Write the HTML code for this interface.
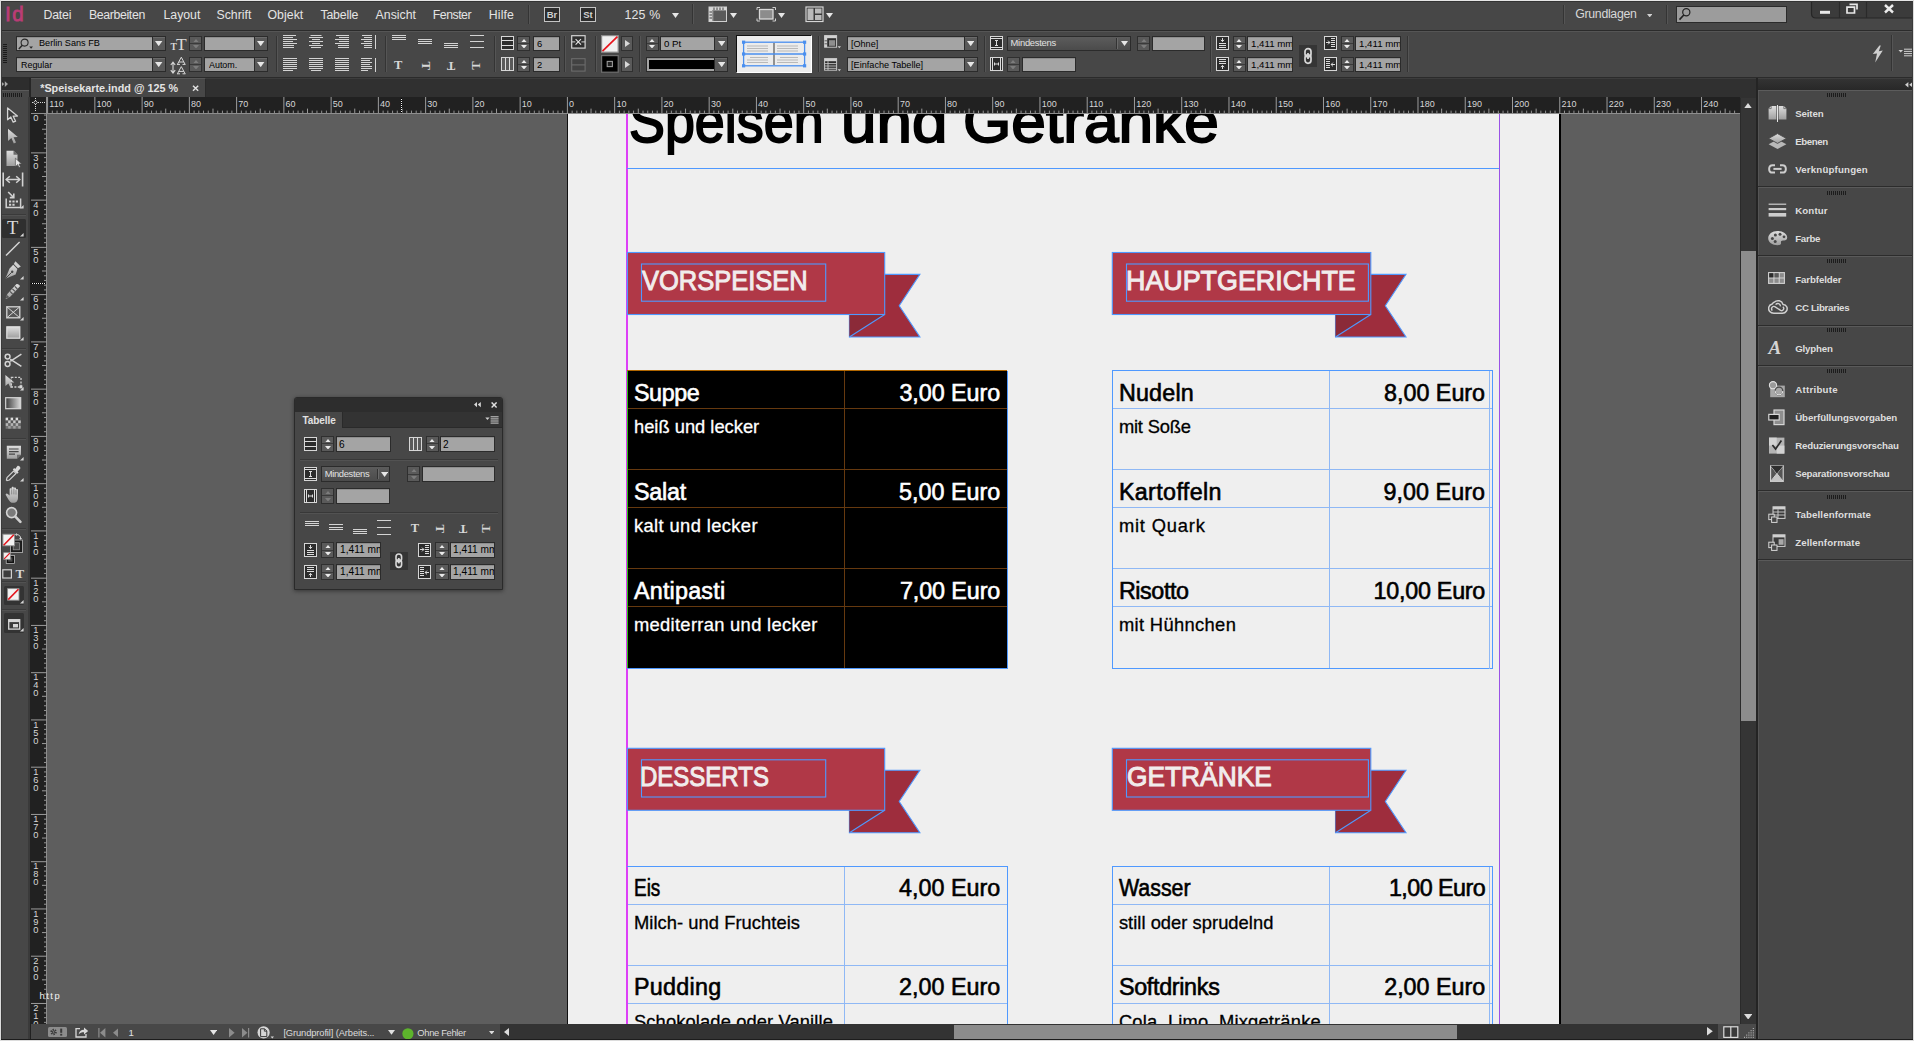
<!DOCTYPE html>
<html lang="de"><head><meta charset="utf-8"><title>Speisekarte.indd</title><style>
html,body{margin:0;padding:0;}
body{width:1914px;height:1041px;overflow:hidden;background:#474747;position:relative;font-family:"Liberation Sans",sans-serif;}
div,svg,span{position:absolute;box-sizing:border-box;}
.t{white-space:nowrap;line-height:1;}
.b{font-weight:bold;}
.fld{background:#a6a6a6;border:1px solid #2c2c2c;}
.ft{white-space:nowrap;line-height:1;color:#000;font-size:11px;}
.doc{font-family:"Liberation Sans",sans-serif;white-space:nowrap;line-height:1;}
span.r{position:static;}
</style></head><body>
<div style="left:47px;top:114px;width:1693px;height:910px;background:#5e5e5e;overflow:hidden;">
<div style="left:520px;top:-114px;width:992px;height:1100px;background:#efefef;"></div>
<div style="left:519.9px;top:-114px;width:1.1px;height:1100px;background:#101010;"></div>
<div style="left:1512px;top:-114px;width:1.5px;height:1100px;background:#000;"></div>
<div style="left:579.3px;top:-114px;width:1.6px;height:1100px;background:#dd3ff7;"></div>
<div style="left:1451.5px;top:-114px;width:1.4px;height:1100px;background:#9a52e6;"></div>
<div class="doc" style="left:582.15px;top:-21.700000000000014px;font-size:60px;color:#000;-webkit-text-stroke:1.9px #000;transform-origin:0 0;transform:scaleX(0.8975);">Speisen</div>
<div class="doc" style="left:793.61px;top:-21.700000000000014px;font-size:60px;color:#000;-webkit-text-stroke:1.9px #000;transform-origin:0 0;transform:scaleX(1.0627);">und</div>
<div class="doc" style="left:915.76px;top:-21.700000000000014px;font-size:60px;color:#000;-webkit-text-stroke:1.9px #000;transform-origin:0 0;transform:scaleX(1.0364);">Getränke</div>
<div style="left:580px;top:53.69999999999999px;width:872px;height:1.2px;background:#4f99ff;"></div>
<svg style="left:0;top:0;" width="1700" height="920" viewBox="0 0 1700 920"><polygon points="802.4,160.4 872.9,160.4 852.2,191.7 872.9,223.0 802.4,223.0" fill="#9e2d3d" stroke="#4f99ff" stroke-width="1.1"/><polygon points="802.4,200.5 837.7,200.5 802.4,223.0" fill="#8b2a38"/><line x1="802.4" y1="223.0" x2="837.7" y2="200.5" stroke="#4f99ff" stroke-width="1.1"/><rect x="580.4" y="138.5" width="257.3" height="62" fill="#b03847" stroke="#4f99ff" stroke-width="1.1"/><rect x="594.5" y="150.0" width="184.2" height="37.2" fill="none" stroke="#4f99ff" stroke-width="1.1"/></svg>
<div class="doc" style="left:594.82px;top:153.4px;font-size:28px;color:#f1ecec;-webkit-text-stroke:1.0px #f1ecec;transform-origin:0 0;transform:scaleX(0.9101);">VORSPEISEN</div>
<svg style="left:0;top:0;" width="1700" height="920" viewBox="0 0 1700 920"><polygon points="1288.5,160.4 1359.0,160.4 1338.3,191.7 1359.0,223.0 1288.5,223.0" fill="#9e2d3d" stroke="#4f99ff" stroke-width="1.1"/><polygon points="1288.5,200.5 1323.8,200.5 1288.5,223.0" fill="#8b2a38"/><line x1="1288.5" y1="223.0" x2="1323.8" y2="200.5" stroke="#4f99ff" stroke-width="1.1"/><rect x="1065.3" y="138.5" width="258.5" height="62" fill="#b03847" stroke="#4f99ff" stroke-width="1.1"/><rect x="1079.5" y="150.0" width="241.9" height="37.2" fill="none" stroke="#4f99ff" stroke-width="1.1"/></svg>
<div class="doc" style="left:1079.29px;top:153.4px;font-size:28px;color:#f1ecec;-webkit-text-stroke:1.0px #f1ecec;transform-origin:0 0;transform:scaleX(0.9590);">HAUPTGERICHTE</div>
<svg style="left:0;top:0;" width="1700" height="920" viewBox="0 0 1700 920"><polygon points="802.4,656.2 872.9,656.2 852.2,687.5 872.9,718.8 802.4,718.8" fill="#9e2d3d" stroke="#4f99ff" stroke-width="1.1"/><polygon points="802.4,696.3 837.7,696.3 802.4,718.8" fill="#8b2a38"/><line x1="802.4" y1="718.8" x2="837.7" y2="696.3" stroke="#4f99ff" stroke-width="1.1"/><rect x="580.4" y="634.3" width="257.3" height="62" fill="#b03847" stroke="#4f99ff" stroke-width="1.1"/><rect x="594.5" y="645.8" width="184.2" height="37.2" fill="none" stroke="#4f99ff" stroke-width="1.1"/></svg>
<div class="doc" style="left:592.71px;top:649.1999999999999px;font-size:28px;color:#f1ecec;-webkit-text-stroke:1.0px #f1ecec;transform-origin:0 0;transform:scaleX(0.8570);">DESSERTS</div>
<svg style="left:0;top:0;" width="1700" height="920" viewBox="0 0 1700 920"><polygon points="1288.5,656.2 1359.0,656.2 1338.3,687.5 1359.0,718.8 1288.5,718.8" fill="#9e2d3d" stroke="#4f99ff" stroke-width="1.1"/><polygon points="1288.5,696.3 1323.8,696.3 1288.5,718.8" fill="#8b2a38"/><line x1="1288.5" y1="718.8" x2="1323.8" y2="696.3" stroke="#4f99ff" stroke-width="1.1"/><rect x="1065.3" y="634.3" width="258.5" height="62" fill="#b03847" stroke="#4f99ff" stroke-width="1.1"/><rect x="1079.5" y="645.8" width="241.9" height="37.2" fill="none" stroke="#4f99ff" stroke-width="1.1"/></svg>
<div class="doc" style="left:1079.88px;top:649.1999999999999px;font-size:28px;color:#f1ecec;-webkit-text-stroke:1.0px #f1ecec;transform-origin:0 0;transform:scaleX(0.9397);">GETRÄNKE</div>
<div style="left:580.4px;top:256.5px;width:379.80000000000007px;height:298px;background:#000;"></div>
<div style="left:580.4px;top:256.0px;width:379.80000000000007px;height:1.1px;background:#66390f;"></div>
<div style="left:580.4px;top:293.7px;width:379.80000000000007px;height:1.1px;background:#66390f;"></div>
<div style="left:580.4px;top:355.0px;width:379.80000000000007px;height:1.1px;background:#66390f;"></div>
<div style="left:580.4px;top:392.7px;width:379.80000000000007px;height:1.1px;background:#66390f;"></div>
<div style="left:580.4px;top:454.0px;width:379.80000000000007px;height:1.1px;background:#66390f;"></div>
<div style="left:580.4px;top:491.70000000000005px;width:379.80000000000007px;height:1.1px;background:#66390f;"></div>
<div style="left:580.4px;top:554.0px;width:379.80000000000007px;height:1.1px;background:#66390f;"></div>
<div style="left:797.0px;top:256.5px;width:1.1px;height:298px;background:#66390f;"></div>
<div style="left:579.8px;top:256.5px;width:1.3px;height:298px;background:#2bc010;"></div>
<div style="left:580.4px;top:255.89999999999998px;width:379.80000000000007px;height:1.2px;background:#b06600;"></div>
<div style="left:959.6px;top:256.5px;width:1.3px;height:298.5px;background:#4f99ff;"></div>
<div style="left:580.4px;top:554.1px;width:379.80000000000007px;height:1.2px;background:#4f99ff;"></div>
<div class="doc" style="left:587.0px;top:267.59999999999997px;font-size:23.3px;color:#fff;-webkit-text-stroke:0.6px #fff;letter-spacing:-0.415px;">Suppe</div>
<div class="doc" style="left:852.4000000000001px;top:267.59999999999997px;font-size:23.3px;color:#fff;-webkit-text-stroke:0.6px #fff;letter-spacing:-0.027px;">3,00 Euro</div>
<div class="doc" style="left:587.0px;top:303.79999999999995px;font-size:18.33px;color:#fff;-webkit-text-stroke:0.3px #fff;letter-spacing:-0.008px;">heiß und lecker</div>
<div class="doc" style="left:587.0px;top:366.59999999999997px;font-size:23.3px;color:#fff;-webkit-text-stroke:0.6px #fff;letter-spacing:-0.222px;">Salat</div>
<div class="doc" style="left:852.1px;top:366.59999999999997px;font-size:23.3px;color:#fff;-webkit-text-stroke:0.6px #fff;letter-spacing:0.007px;">5,00 Euro</div>
<div class="doc" style="left:587.0px;top:402.79999999999995px;font-size:18.33px;color:#fff;-webkit-text-stroke:0.3px #fff;letter-spacing:0.381px;">kalt und lecker</div>
<div class="doc" style="left:587.0px;top:465.6px;font-size:23.3px;color:#fff;-webkit-text-stroke:0.6px #fff;letter-spacing:0.215px;">Antipasti</div>
<div class="doc" style="left:853.0px;top:465.6px;font-size:23.3px;color:#fff;-webkit-text-stroke:0.6px #fff;letter-spacing:-0.093px;">7,00 Euro</div>
<div class="doc" style="left:587.0px;top:501.79999999999995px;font-size:18.33px;color:#fff;-webkit-text-stroke:0.3px #fff;letter-spacing:0.311px;">mediterran und lecker</div>
<div style="left:1065.3px;top:256.0px;width:379.79999999999995px;height:1.1px;background:#8fb8f5;"></div>
<div style="left:1065.3px;top:293.7px;width:379.79999999999995px;height:1.1px;background:#8fb8f5;"></div>
<div style="left:1065.3px;top:355.0px;width:379.79999999999995px;height:1.1px;background:#8fb8f5;"></div>
<div style="left:1065.3px;top:392.7px;width:379.79999999999995px;height:1.1px;background:#8fb8f5;"></div>
<div style="left:1065.3px;top:454.0px;width:379.79999999999995px;height:1.1px;background:#8fb8f5;"></div>
<div style="left:1065.3px;top:491.70000000000005px;width:379.79999999999995px;height:1.1px;background:#8fb8f5;"></div>
<div style="left:1065.3px;top:554.0px;width:379.79999999999995px;height:1.1px;background:#8fb8f5;"></div>
<div style="left:1281.8999999999999px;top:256.5px;width:1.1px;height:298px;background:#8fb8f5;"></div>
<div style="left:1064.7px;top:256.5px;width:1.3px;height:298px;background:#8fb8f5;"></div>
<div style="left:1064.8px;top:255.89999999999998px;width:380.79999999999995px;height:1.3px;background:#4f99ff;"></div>
<div style="left:1064.8px;top:554.0px;width:380.79999999999995px;height:1.3px;background:#4f99ff;"></div>
<div style="left:1064.7px;top:256.5px;width:1.2px;height:298px;background:#4f99ff;"></div>
<div style="left:1444.5px;top:256.5px;width:1.2px;height:298px;background:#4f99ff;"></div>
<div style="left:1442.3px;top:256.5px;width:1px;height:298px;background:#8fb8f5;"></div>
<div class="doc" style="left:1071.8999999999999px;top:267.59999999999997px;font-size:23.3px;color:#000;-webkit-text-stroke:0.6px #000;letter-spacing:0.211px;">Nudeln</div>
<div class="doc" style="left:1337.0px;top:267.59999999999997px;font-size:23.3px;color:#000;-webkit-text-stroke:0.6px #000;letter-spacing:0.007px;">8,00 Euro</div>
<div class="doc" style="left:1071.8999999999999px;top:303.79999999999995px;font-size:18.33px;color:#000;-webkit-text-stroke:0.3px #000;letter-spacing:-0.18px;">mit Soße</div>
<div class="doc" style="left:1071.8999999999999px;top:366.59999999999997px;font-size:23.3px;color:#000;-webkit-text-stroke:0.6px #000;letter-spacing:0.369px;">Kartoffeln</div>
<div class="doc" style="left:1336.3999999999999px;top:366.59999999999997px;font-size:23.3px;color:#000;-webkit-text-stroke:0.6px #000;letter-spacing:0.073px;">9,00 Euro</div>
<div class="doc" style="left:1071.8999999999999px;top:402.79999999999995px;font-size:18.33px;color:#000;-webkit-text-stroke:0.3px #000;letter-spacing:0.818px;">mit Quark</div>
<div class="doc" style="left:1071.8999999999999px;top:465.6px;font-size:23.3px;color:#000;-webkit-text-stroke:0.6px #000;letter-spacing:-0.402px;">Risotto</div>
<div class="doc" style="left:1326.5px;top:465.6px;font-size:23.3px;color:#000;-webkit-text-stroke:0.6px #000;letter-spacing:-0.24px;">10,00 Euro</div>
<div class="doc" style="left:1071.8999999999999px;top:501.79999999999995px;font-size:18.33px;color:#000;-webkit-text-stroke:0.3px #000;letter-spacing:0.35px;">mit Hühnchen</div>
<div style="left:580.4px;top:752.0px;width:379.80000000000007px;height:1.1px;background:#8fb8f5;"></div>
<div style="left:580.4px;top:789.7px;width:379.80000000000007px;height:1.1px;background:#8fb8f5;"></div>
<div style="left:580.4px;top:851.0px;width:379.80000000000007px;height:1.1px;background:#8fb8f5;"></div>
<div style="left:580.4px;top:888.7px;width:379.80000000000007px;height:1.1px;background:#8fb8f5;"></div>
<div style="left:580.4px;top:950.0px;width:379.80000000000007px;height:1.1px;background:#8fb8f5;"></div>
<div style="left:580.4px;top:987.7px;width:379.80000000000007px;height:1.1px;background:#8fb8f5;"></div>
<div style="left:580.4px;top:1050.0px;width:379.80000000000007px;height:1.1px;background:#8fb8f5;"></div>
<div style="left:797.0px;top:752.5px;width:1.1px;height:298px;background:#8fb8f5;"></div>
<div style="left:579.8px;top:752.5px;width:1.3px;height:298px;background:#8fb8f5;"></div>
<div style="left:579.9px;top:751.9px;width:380.80000000000007px;height:1.3px;background:#4f99ff;"></div>
<div style="left:579.9px;top:1050.0px;width:380.80000000000007px;height:1.3px;background:#4f99ff;"></div>
<div style="left:579.8px;top:752.5px;width:1.2px;height:298px;background:#dd3ff7;"></div>
<div style="left:959.6px;top:752.5px;width:1.2px;height:298px;background:#4f99ff;"></div>
<div class="doc" style="left:587.0px;top:762.6px;font-size:23.3px;color:#000;-webkit-text-stroke:0.6px #000;transform-origin:0 0;transform:scaleX(0.8125);">Eis</div>
<div class="doc" style="left:852.0px;top:762.6px;font-size:23.3px;color:#000;-webkit-text-stroke:0.6px #000;letter-spacing:0.018px;">4,00 Euro</div>
<div class="doc" style="left:587.0px;top:799.8px;font-size:18.33px;color:#000;-webkit-text-stroke:0.3px #000;letter-spacing:0.049px;">Milch- und Fruchteis</div>
<div class="doc" style="left:587.0px;top:861.6px;font-size:23.3px;color:#000;-webkit-text-stroke:0.6px #000;letter-spacing:0.299px;">Pudding</div>
<div class="doc" style="left:852.0px;top:861.6px;font-size:23.3px;color:#000;-webkit-text-stroke:0.6px #000;letter-spacing:0.018px;">2,00 Euro</div>
<div class="doc" style="left:587.0px;top:898.8000000000001px;font-size:18.33px;color:#000;-webkit-text-stroke:0.3px #000;letter-spacing:0.116px;">Schokolade oder Vanille</div>
<div style="left:1065.3px;top:752.0px;width:379.79999999999995px;height:1.1px;background:#8fb8f5;"></div>
<div style="left:1065.3px;top:789.7px;width:379.79999999999995px;height:1.1px;background:#8fb8f5;"></div>
<div style="left:1065.3px;top:851.0px;width:379.79999999999995px;height:1.1px;background:#8fb8f5;"></div>
<div style="left:1065.3px;top:888.7px;width:379.79999999999995px;height:1.1px;background:#8fb8f5;"></div>
<div style="left:1065.3px;top:950.0px;width:379.79999999999995px;height:1.1px;background:#8fb8f5;"></div>
<div style="left:1065.3px;top:987.7px;width:379.79999999999995px;height:1.1px;background:#8fb8f5;"></div>
<div style="left:1065.3px;top:1050.0px;width:379.79999999999995px;height:1.1px;background:#8fb8f5;"></div>
<div style="left:1281.8999999999999px;top:752.5px;width:1.1px;height:298px;background:#8fb8f5;"></div>
<div style="left:1064.7px;top:752.5px;width:1.3px;height:298px;background:#8fb8f5;"></div>
<div style="left:1064.8px;top:751.9px;width:380.79999999999995px;height:1.3px;background:#4f99ff;"></div>
<div style="left:1064.8px;top:1050.0px;width:380.79999999999995px;height:1.3px;background:#4f99ff;"></div>
<div style="left:1064.7px;top:752.5px;width:1.2px;height:298px;background:#4f99ff;"></div>
<div style="left:1444.5px;top:752.5px;width:1.2px;height:298px;background:#4f99ff;"></div>
<div style="left:1442.3px;top:752.5px;width:1px;height:298px;background:#8fb8f5;"></div>
<div class="doc" style="left:1071.8999999999999px;top:762.6px;font-size:23.3px;color:#000;-webkit-text-stroke:0.6px #000;transform-origin:0 0;transform:scaleX(0.9167);">Wasser</div>
<div class="doc" style="left:1341.8999999999999px;top:762.6px;font-size:23.3px;color:#000;-webkit-text-stroke:0.6px #000;letter-spacing:-0.538px;">1,00 Euro</div>
<div class="doc" style="left:1071.8999999999999px;top:799.8px;font-size:18.33px;color:#000;-webkit-text-stroke:0.3px #000;letter-spacing:0.032px;">still oder sprudelnd</div>
<div class="doc" style="left:1071.8999999999999px;top:861.6px;font-size:23.3px;color:#000;-webkit-text-stroke:0.6px #000;letter-spacing:-0.3px;">Softdrinks</div>
<div class="doc" style="left:1337.1999999999998px;top:861.6px;font-size:23.3px;color:#000;-webkit-text-stroke:0.6px #000;letter-spacing:-0.015px;">2,00 Euro</div>
<div class="doc" style="left:1071.8999999999999px;top:898.8000000000001px;font-size:18.33px;color:#000;-webkit-text-stroke:0.3px #000;letter-spacing:0.19px;">Cola, Limo, Mixgetränke</div>
</div>
<div style="left:0px;top:0px;width:1914px;height:30px;background:#474747;"></div>
<div style="left:0px;top:30px;width:1914px;height:1px;background:#2b2b2b;"></div>
<div style="left:0px;top:31px;width:1914px;height:1px;background:#555;"></div>
<div style="left:0px;top:32px;width:1914px;height:45px;background:#474747;"></div>
<div style="left:0px;top:77px;width:1914px;height:1px;background:#2b2b2b;"></div>
<div class="t" style="left:5px;top:4.2px;font-size:20.6px;color:#ba3c76;letter-spacing:1.5px;-webkit-text-stroke:0.8px #ba3c76;">Id</div>
<div class="t" style="left:43.5px;top:8.8px;font-size:12.3px;color:#e4e4e4;letter-spacing:-0.183px;">Datei</div>
<div class="t" style="left:89.0px;top:8.8px;font-size:12.3px;color:#e4e4e4;letter-spacing:-0.359px;">Bearbeiten</div>
<div class="t" style="left:163.5px;top:8.8px;font-size:12.3px;color:#e4e4e4;letter-spacing:-0.022px;">Layout</div>
<div class="t" style="left:216.5px;top:8.8px;font-size:12.3px;color:#e4e4e4;letter-spacing:0.006px;">Schrift</div>
<div class="t" style="left:267.5px;top:8.8px;font-size:12.3px;color:#e4e4e4;letter-spacing:0.042px;">Objekt</div>
<div class="t" style="left:320.4px;top:8.8px;font-size:12.3px;color:#e4e4e4;letter-spacing:-0.154px;">Tabelle</div>
<div class="t" style="left:375.6px;top:8.8px;font-size:12.3px;color:#e4e4e4;letter-spacing:0.009px;">Ansicht</div>
<div class="t" style="left:432.8px;top:8.8px;font-size:12.3px;color:#e4e4e4;letter-spacing:-0.5px;">Fenster</div>
<div class="t" style="left:488.8px;top:8.8px;font-size:12.3px;color:#e4e4e4;letter-spacing:0.139px;">Hilfe</div>
<div style="left:528px;top:5px;width:1px;height:19px;background:#343434;"></div>
<div style="left:529px;top:5px;width:1px;height:19px;background:#555;"></div>
<div style="left:544px;top:6.5px;width:16px;height:15.5px;background:#2d2d2d;border:1px solid #c4c4c4;"><div class="t b" style="left:0;width:14px;text-align:center;top:2.2px;font-size:9.5px;color:#d0d0d0;">Br</div></div>
<div style="left:580px;top:6.5px;width:16px;height:15.5px;background:#2d2d2d;border:1px solid #c4c4c4;"><div class="t b" style="left:0;width:14px;text-align:center;top:2.2px;font-size:9.5px;color:#d0d0d0;">St</div></div>
<div class="t" style="left:624.5px;top:8.6px;font-size:12.4px;color:#e4e4e4;letter-spacing:0.168px;">125 %</div>
<svg style="left:672px;top:13px;" width="7" height="5" viewBox="0 0 7 5"><polygon points="0,0 7,0 3.5,5" fill="#e6e6e6"/></svg>
<div style="left:691.5px;top:4px;width:1px;height:20px;background:#343434;"></div>
<div style="left:692.5px;top:4px;width:1px;height:20px;background:#555;"></div>
<svg style="left:708px;top:6px;" width="20" height="17" viewBox="0 0 20 17"><rect x="1" y="1" width="17.5" height="14.5" fill="#8a8a8a"/><rect x="5.5" y="5" width="13" height="10.5" fill="#5a5a5a"/><rect x="1" y="1" width="17.5" height="3" fill="#d8d8d8"/><rect x="1" y="1" width="3.2" height="14.5" fill="#d8d8d8"/><path d="M6 1v3M9 1v3M12 1v3M15 1v3M1 6h3M1 9h3M1 12h3" stroke="#444" stroke-width="1"/><rect x="1" y="1" width="17.5" height="14.5" fill="none" stroke="#d0d0d0" stroke-width="1"/></svg>
<svg style="left:729.5px;top:13px;" width="7" height="5" viewBox="0 0 7 5"><polygon points="0,0 7,0 3.5,5" fill="#e6e6e6"/></svg>
<svg style="left:756px;top:6px;" width="21" height="17" viewBox="0 0 21 17"><path d="M1 4V1.5h3M16.5 1.5h3V4M1 12.5V15h3M16.5 15h3v-2.5" fill="none" stroke="#d0d0d0" stroke-width="1"/><rect x="3.5" y="3.5" width="13.5" height="9.5" fill="#8c8c8c" stroke="#d8d8d8" stroke-width="1.3"/></svg>
<svg style="left:777.5px;top:13px;" width="7" height="5" viewBox="0 0 7 5"><polygon points="0,0 7,0 3.5,5" fill="#e6e6e6"/></svg>
<svg style="left:804.5px;top:6px;" width="20" height="17" viewBox="0 0 20 17"><rect x="1" y="1" width="17" height="14.5" fill="#3a3a3a" stroke="#d6d6d6" stroke-width="1.2"/><rect x="2.5" y="2.5" width="6" height="11.5" fill="#b9b9b9"/><rect x="10" y="2.5" width="6.5" height="5" fill="#b9b9b9"/><rect x="10" y="9" width="6.5" height="5" fill="#b9b9b9"/></svg>
<svg style="left:825.5px;top:13px;" width="7" height="5" viewBox="0 0 7 5"><polygon points="0,0 7,0 3.5,5" fill="#e6e6e6"/></svg>
<div style="left:1562.5px;top:5px;width:1px;height:19px;background:#343434;"></div>
<div style="left:1563.5px;top:5px;width:1px;height:19px;background:#555;"></div>
<div class="t" style="left:1575.3px;top:7.6px;font-size:12.3px;color:#d8d8d8;letter-spacing:-0.308px;">Grundlagen</div>
<svg style="left:1647px;top:14px;" width="5.4" height="3.4" viewBox="0 0 5.4 3.4"><polygon points="0,0 5.4,0 2.7,3.4" fill="#d0d0d0"/></svg>
<div style="left:1665.5px;top:5px;width:1px;height:19px;background:#343434;"></div>
<div style="left:1666.5px;top:5px;width:1px;height:19px;background:#555;"></div>
<div style="left:1676px;top:5.5px;width:111px;height:17px;background:#9c9c9c;border:1px solid #2b2b2b;"></div>
<svg style="left:1678px;top:7px;" width="14" height="14" viewBox="0 0 14 14"><circle cx="8.3" cy="5.2" r="3.6" fill="none" stroke="#222" stroke-width="1.2"/><path d="M5.8 8L1.5 12.6" stroke="#222" stroke-width="1.6"/></svg>
<svg style="left:1810px;top:0px;" width="104" height="20" viewBox="0 0 104 20"><path d="M1.5 0V13.5Q1.5 18 6 18H103V0Z" fill="#3b3b3b" stroke="#262626" stroke-width="1.2"/><path d="M29.5 0V18M56.5 0V18" stroke="#2a2a2a" stroke-width="1.2"/><rect x="10" y="10.8" width="10" height="3" fill="#e8e8e8"/><path d="M39.5 4.3h7.5v5.2M44.5 7.2h-7.5v5.8h7.5z" fill="none" stroke="#e8e8e8" stroke-width="1.7"/><path d="M75 5l8 7.5M83 5l-8 7.5" stroke="#ececec" stroke-width="2.4"/></svg>
<div style="left:2.5px;top:44px;width:4px;height:1px;background:#1a1a1a;"></div>
<div style="left:2.5px;top:46px;width:4px;height:1px;background:#1a1a1a;"></div>
<div style="left:2.5px;top:48px;width:4px;height:1px;background:#1a1a1a;"></div>
<div style="left:2.5px;top:50px;width:4px;height:1px;background:#1a1a1a;"></div>
<div style="left:2.5px;top:52px;width:4px;height:1px;background:#1a1a1a;"></div>
<div style="left:2.5px;top:54px;width:4px;height:1px;background:#1a1a1a;"></div>
<div style="left:2.5px;top:56px;width:4px;height:1px;background:#1a1a1a;"></div>
<div style="left:2.5px;top:58px;width:4px;height:1px;background:#1a1a1a;"></div>
<div style="left:2.5px;top:60px;width:4px;height:1px;background:#1a1a1a;"></div>
<div style="left:2.5px;top:62px;width:4px;height:1px;background:#1a1a1a;"></div>
<div style="left:16px;top:36px;width:150px;height:14.5px;background:#a4a4a4;border:1px solid #2b2b2b;overflow:hidden;box-shadow:inset 0 1px 0 #8e8e8e;"><div class="ft" style="left:21.5px;top:0.58px;font-size:9.9px;transform-origin:0 0;transform:scaleX(0.9239);">Berlin Sans FB</div></div>
<div style="left:152px;top:36px;width:14px;height:14.5px;background:#595959;border:1px solid #2b2b2b;box-shadow:inset 0 1px 0 #6a6a6a;"></div>
<svg style="left:155.4px;top:40.65px;" width="7.4" height="5.2" viewBox="0 0 7.4 5.2"><polygon points="0,0 7.4,0 3.7,5.2" fill="#e6e6e6"/></svg>
<svg style="left:17.5px;top:37.5px;" width="18" height="12" viewBox="0 0 18 12"><circle cx="6.6" cy="4.6" r="3.5" fill="none" stroke="#2a2a2a" stroke-width="1.1"/><path d="M4.3 7.3L0.8 11" stroke="#2a2a2a" stroke-width="1.5"/><polygon points="11.2,8.6 15,8.6 13.1,10.8" fill="#2a2a2a"/></svg>
<div style="left:16px;top:57px;width:150px;height:14.5px;background:#a4a4a4;border:1px solid #2b2b2b;overflow:hidden;box-shadow:inset 0 1px 0 #8e8e8e;"><div class="ft" style="left:3.5px;top:1.58px;font-size:9.9px;transform-origin:0 0;transform:scaleX(0.9028);">Regular</div></div>
<div style="left:152px;top:57px;width:14px;height:14.5px;background:#595959;border:1px solid #2b2b2b;box-shadow:inset 0 1px 0 #6a6a6a;"></div>
<svg style="left:155.4px;top:61.65px;" width="7.4" height="5.2" viewBox="0 0 7.4 5.2"><polygon points="0,0 7.4,0 3.7,5.2" fill="#e6e6e6"/></svg>
<div class="t" style="left:170.6px;top:42.6px;font-family:'Liberation Serif',serif;font-size:9.5px;color:#d8d8d8;font-weight:bold;">T</div>
<div class="t" style="left:176px;top:35.6px;font-family:'Liberation Serif',serif;font-size:17.5px;color:#d8d8d8;">T</div>
<div style="left:189px;top:36px;width:13px;height:14.5px;background:#5a5a5a;border:1px solid #2f2f2f;"></div>
<div style="left:190px;top:42.75px;width:11px;height:1px;background:#3a3a3a;"></div>
<svg style="left:192.5px;top:38.5px;" width="6" height="3.5" viewBox="0 0 6 3.5"><polygon points="0,3.5 6,3.5 3.0,0" fill="#7c7c7c"/></svg>
<svg style="left:192.5px;top:44.5px;" width="6" height="3.5" viewBox="0 0 6 3.5"><polygon points="0,0 6,0 3.0,3.5" fill="#7c7c7c"/></svg>
<div style="left:204px;top:36px;width:64px;height:14.5px;background:#a4a4a4;border:1px solid #2b2b2b;overflow:hidden;box-shadow:inset 0 1px 0 #8e8e8e;"></div>
<div style="left:254px;top:36px;width:14px;height:14.5px;background:#595959;border:1px solid #2b2b2b;box-shadow:inset 0 1px 0 #6a6a6a;"></div>
<svg style="left:257.4px;top:40.65px;" width="7.4" height="5.2" viewBox="0 0 7.4 5.2"><polygon points="0,0 7.4,0 3.7,5.2" fill="#e6e6e6"/></svg>
<svg style="left:170px;top:56px;" width="18" height="19" viewBox="0 0 18 19"><path d="M3 6.5v10M0.8 9L3 6.2 5.2 9M0.8 14.2L3 17 5.2 14.2" fill="none" stroke="#d8d8d8" stroke-width="1.1"/><path d="M7.5 8.2L11.3 1.2 15 8.2M8.8 6h5M7 8.4h3M12.5 8.4h3" fill="none" stroke="#d8d8d8" stroke-width="1"/><path d="M7.5 17.6L11.3 10.6 15 17.6M8.8 15.4h5M7 17.8h3M12.5 17.8h3" fill="none" stroke="#d8d8d8" stroke-width="1"/></svg>
<div style="left:189px;top:57px;width:13px;height:14.5px;background:#5a5a5a;border:1px solid #2f2f2f;"></div>
<div style="left:190px;top:63.75px;width:11px;height:1px;background:#3a3a3a;"></div>
<svg style="left:192.5px;top:59.5px;" width="6" height="3.5" viewBox="0 0 6 3.5"><polygon points="0,3.5 6,3.5 3.0,0" fill="#7c7c7c"/></svg>
<svg style="left:192.5px;top:65.5px;" width="6" height="3.5" viewBox="0 0 6 3.5"><polygon points="0,0 6,0 3.0,3.5" fill="#7c7c7c"/></svg>
<div style="left:204px;top:57px;width:64px;height:14.5px;background:#a4a4a4;border:1px solid #2b2b2b;overflow:hidden;box-shadow:inset 0 1px 0 #8e8e8e;"><div class="ft" style="left:3.5px;top:1.58px;font-size:9.9px;transform-origin:0 0;transform:scaleX(0.9023);">Autom.</div></div>
<div style="left:254px;top:57px;width:14px;height:14.5px;background:#595959;border:1px solid #2b2b2b;box-shadow:inset 0 1px 0 #6a6a6a;"></div>
<svg style="left:257.4px;top:61.65px;" width="7.4" height="5.2" viewBox="0 0 7.4 5.2"><polygon points="0,0 7.4,0 3.7,5.2" fill="#e6e6e6"/></svg>
<div style="left:276px;top:35.5px;width:1px;height:36.5px;background:#343434;"></div>
<div style="left:277px;top:35.5px;width:1px;height:36.5px;background:#555;"></div>
<svg style="left:283px;top:35px;" width="16" height="14" viewBox="0 0 16 14"><rect x="0" y="0" width="13" height="1" fill="#d4d4d4"/><rect x="0" y="2" width="10" height="1" fill="#d4d4d4"/><rect x="0" y="4" width="14" height="1" fill="#d4d4d4"/><rect x="0" y="6" width="10" height="1" fill="#d4d4d4"/><rect x="0" y="8" width="14" height="1" fill="#d4d4d4"/><rect x="0" y="10" width="11" height="1" fill="#d4d4d4"/><rect x="0" y="12" width="11" height="1" fill="#d4d4d4"/></svg>
<svg style="left:309px;top:35px;" width="16" height="14" viewBox="0 0 16 14"><rect x="1.5" y="0" width="11.0" height="1" fill="#d4d4d4"/><rect x="0" y="2" width="14" height="1" fill="#d4d4d4"/><rect x="3" y="4" width="8" height="1" fill="#d4d4d4"/><rect x="0" y="6" width="14" height="1" fill="#d4d4d4"/><rect x="3" y="8" width="8" height="1" fill="#d4d4d4"/><rect x="0" y="10" width="14" height="1" fill="#d4d4d4"/><rect x="2" y="12" width="10" height="1" fill="#d4d4d4"/></svg>
<svg style="left:335px;top:35px;" width="16" height="14" viewBox="0 0 16 14"><rect x="1" y="0" width="13" height="1" fill="#d4d4d4"/><rect x="4" y="2" width="10" height="1" fill="#d4d4d4"/><rect x="0" y="4" width="14" height="1" fill="#d4d4d4"/><rect x="4" y="6" width="10" height="1" fill="#d4d4d4"/><rect x="0" y="8" width="14" height="1" fill="#d4d4d4"/><rect x="3" y="10" width="11" height="1" fill="#d4d4d4"/><rect x="3" y="12" width="11" height="1" fill="#d4d4d4"/></svg>
<svg style="left:361px;top:35px;" width="16" height="14" viewBox="0 0 16 14"><rect x="1" y="0" width="10" height="1" fill="#d4d4d4"/><rect x="3" y="2" width="8" height="1" fill="#d4d4d4"/><rect x="0" y="4" width="11" height="1" fill="#d4d4d4"/><rect x="3" y="6" width="8" height="1" fill="#d4d4d4"/><rect x="0" y="8" width="11" height="1" fill="#d4d4d4"/><rect x="3" y="10" width="8" height="1" fill="#d4d4d4"/><rect x="3" y="12" width="8" height="1" fill="#d4d4d4"/></svg>
<div style="left:374.5px;top:35px;width:1.2px;height:13.5px;background:#d4d4d4;"></div>
<svg style="left:283px;top:58px;" width="16" height="14" viewBox="0 0 16 14"><rect x="0" y="0" width="14" height="1" fill="#d4d4d4"/><rect x="0" y="2" width="14" height="1" fill="#d4d4d4"/><rect x="0" y="4" width="14" height="1" fill="#d4d4d4"/><rect x="0" y="6" width="14" height="1" fill="#d4d4d4"/><rect x="0" y="8" width="14" height="1" fill="#d4d4d4"/><rect x="0" y="10" width="14" height="1" fill="#d4d4d4"/><rect x="0" y="12" width="10" height="1" fill="#d4d4d4"/></svg>
<svg style="left:309px;top:58px;" width="16" height="14" viewBox="0 0 16 14"><rect x="0" y="0" width="14" height="1" fill="#d4d4d4"/><rect x="0" y="2" width="14" height="1" fill="#d4d4d4"/><rect x="0" y="4" width="14" height="1" fill="#d4d4d4"/><rect x="0" y="6" width="14" height="1" fill="#d4d4d4"/><rect x="0" y="8" width="14" height="1" fill="#d4d4d4"/><rect x="0" y="10" width="14" height="1" fill="#d4d4d4"/><rect x="2" y="12" width="10" height="1" fill="#d4d4d4"/></svg>
<svg style="left:335px;top:58px;" width="16" height="14" viewBox="0 0 16 14"><rect x="0" y="0" width="14" height="1" fill="#d4d4d4"/><rect x="0" y="2" width="14" height="1" fill="#d4d4d4"/><rect x="0" y="4" width="14" height="1" fill="#d4d4d4"/><rect x="0" y="6" width="14" height="1" fill="#d4d4d4"/><rect x="0" y="8" width="14" height="1" fill="#d4d4d4"/><rect x="0" y="10" width="14" height="1" fill="#d4d4d4"/><rect x="0" y="12" width="14" height="1" fill="#d4d4d4"/></svg>
<svg style="left:361px;top:58px;" width="16" height="14" viewBox="0 0 16 14"><rect x="0" y="0" width="11" height="1" fill="#d4d4d4"/><rect x="0" y="2" width="9" height="1" fill="#d4d4d4"/><rect x="0" y="4" width="11" height="1" fill="#d4d4d4"/><rect x="0" y="6" width="9" height="1" fill="#d4d4d4"/><rect x="0" y="8" width="11" height="1" fill="#d4d4d4"/><rect x="0" y="10" width="11" height="1" fill="#d4d4d4"/><rect x="0" y="12" width="7" height="1" fill="#d4d4d4"/></svg>
<div style="left:374.5px;top:58px;width:1.2px;height:13.5px;background:#d4d4d4;"></div>
<div style="left:385px;top:35.5px;width:1px;height:36.5px;background:#343434;"></div>
<div style="left:386px;top:35.5px;width:1px;height:36.5px;background:#555;"></div>
<div style="left:392px;top:35px;width:14px;height:1px;background:#d4d4d4;"></div>
<div style="left:392px;top:37.2px;width:14px;height:1px;background:#d4d4d4;"></div>
<div style="left:392px;top:39.4px;width:14px;height:1px;background:#d4d4d4;"></div>
<div style="left:418px;top:38.6px;width:14px;height:1px;background:#d4d4d4;"></div>
<div style="left:418px;top:40.8px;width:14px;height:1px;background:#d4d4d4;"></div>
<div style="left:418px;top:43px;width:14px;height:1px;background:#d4d4d4;"></div>
<div style="left:444px;top:42.6px;width:14px;height:1px;background:#d4d4d4;"></div>
<div style="left:444px;top:44.8px;width:14px;height:1px;background:#d4d4d4;"></div>
<div style="left:444px;top:47px;width:14px;height:1px;background:#d4d4d4;"></div>
<div style="left:470px;top:35px;width:14px;height:1px;background:#d4d4d4;"></div>
<div style="left:470px;top:41.2px;width:14px;height:1px;background:#d4d4d4;"></div>
<div style="left:470px;top:47.4px;width:14px;height:1px;background:#d4d4d4;"></div>
<div class="t" style="left:393.2px;top:60px;width:10px;height:10px;"><div class="t" style="left:0;top:-1.2px;width:10px;text-align:center;font-family:'Liberation Serif',serif;font-weight:bold;font-size:12.5px;color:#d8d8d8;transform-origin:5px 6.6px;transform:rotate(0deg);">T</div></div>
<div class="t" style="left:419.5px;top:60px;width:10px;height:10px;"><div class="t" style="left:0;top:-1.2px;width:10px;text-align:center;font-family:'Liberation Serif',serif;font-weight:bold;font-size:12.5px;color:#d8d8d8;transform-origin:5px 6.6px;transform:rotate(90deg);">T</div></div>
<div class="t" style="left:445.5px;top:60px;width:10px;height:10px;"><div class="t" style="left:0;top:-1.2px;width:10px;text-align:center;font-family:'Liberation Serif',serif;font-weight:bold;font-size:12.5px;color:#d8d8d8;transform-origin:5px 6.6px;transform:rotate(180deg);">T</div></div>
<div class="t" style="left:471.5px;top:60px;width:10px;height:10px;"><div class="t" style="left:0;top:-1.2px;width:10px;text-align:center;font-family:'Liberation Serif',serif;font-weight:bold;font-size:12.5px;color:#d8d8d8;transform-origin:5px 6.6px;transform:rotate(270deg);">T</div></div>
<div style="left:494px;top:35.5px;width:1px;height:36.5px;background:#343434;"></div>
<div style="left:495px;top:35.5px;width:1px;height:36.5px;background:#555;"></div>
<svg style="left:501px;top:36px;" width="13" height="14" viewBox="0 0 13 14"><rect x="0.5" y="0.5" width="12" height="13" fill="#2c2c2c" stroke="#d6d6d6" stroke-width="1"/><path d="M0.5 4.5h12M0.5 9.5h12" stroke="#dcdcdc" stroke-width="1"/></svg>
<div style="left:517.3px;top:36px;width:13px;height:14.5px;background:#5a5a5a;border:1px solid #2f2f2f;"></div>
<div style="left:518.3px;top:42.75px;width:11px;height:1px;background:#3a3a3a;"></div>
<svg style="left:520.8px;top:38.5px;" width="6" height="3.5" viewBox="0 0 6 3.5"><polygon points="0,3.5 6,3.5 3.0,0" fill="#eaeaea"/></svg>
<svg style="left:520.8px;top:44.5px;" width="6" height="3.5" viewBox="0 0 6 3.5"><polygon points="0,0 6,0 3.0,3.5" fill="#eaeaea"/></svg>
<div style="left:532.5px;top:36px;width:27.5px;height:14.5px;background:#a4a4a4;border:1px solid #2b2b2b;overflow:hidden;box-shadow:inset 0 1px 0 #8e8e8e;"><div class="ft" style="left:3.2px;top:1.58px;font-size:9.9px;transform-origin:0 0;transform:scaleX(0.95);">6</div></div>
<svg style="left:501px;top:57px;" width="13" height="14" viewBox="0 0 13 14"><rect x="0.5" y="0.5" width="12" height="13" fill="#5a5a5a" stroke="#d6d6d6" stroke-width="1"/><path d="M4.5 0.5v13M8.5 0.5v13" stroke="#dcdcdc" stroke-width="1"/></svg>
<div style="left:517.3px;top:57px;width:13px;height:14.5px;background:#5a5a5a;border:1px solid #2f2f2f;"></div>
<div style="left:518.3px;top:63.75px;width:11px;height:1px;background:#3a3a3a;"></div>
<svg style="left:520.8px;top:59.5px;" width="6" height="3.5" viewBox="0 0 6 3.5"><polygon points="0,3.5 6,3.5 3.0,0" fill="#eaeaea"/></svg>
<svg style="left:520.8px;top:65.5px;" width="6" height="3.5" viewBox="0 0 6 3.5"><polygon points="0,0 6,0 3.0,3.5" fill="#eaeaea"/></svg>
<div style="left:532.5px;top:57px;width:27.5px;height:14.5px;background:#a4a4a4;border:1px solid #2b2b2b;overflow:hidden;box-shadow:inset 0 1px 0 #8e8e8e;"><div class="ft" style="left:3.2px;top:1.58px;font-size:9.9px;transform-origin:0 0;transform:scaleX(0.95);">2</div></div>
<div style="left:564.3px;top:35.5px;width:1px;height:36.5px;background:#343434;"></div>
<div style="left:565.3px;top:35.5px;width:1px;height:36.5px;background:#555;"></div>
<svg style="left:570.5px;top:34.5px;" width="15" height="14" viewBox="0 0 15 14"><rect x="0.7" y="0.7" width="13.4" height="12.4" fill="#2e2e2e" stroke="#d4d4d4" stroke-width="1.2"/><path d="M0.7 6.9h3.6M10.4 6.9h3.6" stroke="#d4d4d4" stroke-width="1"/><path d="M4.6 4.2l5.4 5.4M10 4.2l-5.4 5.4" stroke="#e8e8e8" stroke-width="1.1"/></svg>
<svg style="left:570.5px;top:58px;" width="15" height="14" viewBox="0 0 15 14"><rect x="0.7" y="0.7" width="13.4" height="12.4" fill="#424242" stroke="#6c6c6c" stroke-width="1.1"/><path d="M0.7 6.9h13.4" stroke="#6c6c6c" stroke-width="1.1"/></svg>
<div style="left:595px;top:35.5px;width:1px;height:36.5px;background:#343434;"></div>
<div style="left:596px;top:35.5px;width:1px;height:36.5px;background:#555;"></div>
<svg style="left:600.5px;top:34.5px;" width="18" height="18" viewBox="0 0 18 18"><rect x="0.6" y="0.6" width="16.6" height="16.6" fill="#f0f0f0" stroke="#8a8a8a" stroke-width="1.2"/><path d="M1.5 16.2L16.4 1.6" stroke="#e8141c" stroke-width="1.7"/></svg>
<svg style="left:600.5px;top:55.2px;" width="18" height="18" viewBox="0 0 18 18"><rect x="0.6" y="0.6" width="16.6" height="16.6" fill="#000" stroke="#6e6e6e" stroke-width="1.2"/><rect x="6.2" y="6.4" width="5.2" height="5.2" fill="#222" stroke="#9a9a9a" stroke-width="1.1"/></svg>
<div style="left:621px;top:36px;width:12px;height:14.5px;background:#5a5a5a;border:1px solid #303030;"></div>
<svg style="left:625px;top:39.6px;" width="5" height="7" viewBox="0 0 5 7"><polygon points="0,0 5,3.5 0,7" fill="#d8d8d8"/></svg>
<div style="left:621px;top:57px;width:12px;height:14.5px;background:#5a5a5a;border:1px solid #303030;"></div>
<svg style="left:625px;top:60.6px;" width="5" height="7" viewBox="0 0 5 7"><polygon points="0,0 5,3.5 0,7" fill="#d8d8d8"/></svg>
<div style="left:638.7px;top:35.5px;width:1px;height:36.5px;background:#343434;"></div>
<div style="left:639.7px;top:35.5px;width:1px;height:36.5px;background:#555;"></div>
<div style="left:645.5px;top:36px;width:13px;height:14.5px;background:#5a5a5a;border:1px solid #2f2f2f;"></div>
<div style="left:646.5px;top:42.75px;width:11px;height:1px;background:#3a3a3a;"></div>
<svg style="left:649.0px;top:38.5px;" width="6" height="3.5" viewBox="0 0 6 3.5"><polygon points="0,3.5 6,3.5 3.0,0" fill="#eaeaea"/></svg>
<svg style="left:649.0px;top:44.5px;" width="6" height="3.5" viewBox="0 0 6 3.5"><polygon points="0,0 6,0 3.0,3.5" fill="#eaeaea"/></svg>
<div style="left:660.3px;top:36px;width:68px;height:14.5px;background:#a4a4a4;border:1px solid #2b2b2b;overflow:hidden;box-shadow:inset 0 1px 0 #8e8e8e;"><div class="ft" style="left:3.2px;top:1.58px;font-size:9.9px;transform-origin:0 0;transform:scaleX(0.9767);">0 Pt</div></div>
<div style="left:714.3px;top:36px;width:14px;height:14.5px;background:#595959;border:1px solid #2b2b2b;box-shadow:inset 0 1px 0 #6a6a6a;"></div>
<svg style="left:717.6999999999999px;top:40.65px;" width="7.4" height="5.2" viewBox="0 0 7.4 5.2"><polygon points="0,0 7.4,0 3.7,5.2" fill="#e6e6e6"/></svg>
<div style="left:645.5px;top:57px;width:82.8px;height:14.5px;background:#a4a4a4;border:1px solid #2b2b2b;overflow:hidden;box-shadow:inset 0 1px 0 #8e8e8e;"></div>
<div style="left:714.3px;top:57px;width:14px;height:14.5px;background:#595959;border:1px solid #2b2b2b;box-shadow:inset 0 1px 0 #6a6a6a;"></div>
<svg style="left:717.6999999999999px;top:61.65px;" width="7.4" height="5.2" viewBox="0 0 7.4 5.2"><polygon points="0,0 7.4,0 3.7,5.2" fill="#e6e6e6"/></svg>
<div style="left:648.5px;top:60px;width:65px;height:8.5px;background:#000;"></div>
<div style="left:736.3px;top:34.6px;width:76px;height:38.8px;background:#ececec;border-top:1px solid #111;border-left:1px solid #111;border-right:1px solid #fff;border-bottom:1px solid #fff;"></div>
<svg style="left:736.3px;top:34.6px;" width="76" height="38.8" viewBox="0 0 76 38.8"><g stroke="#b9b9b9" stroke-width="1"><path d="M11 11h21"/><path d="M11 13.5h21"/><path d="M11 16h21"/><path d="M14 22.5h18"/><path d="M11 25h21"/><path d="M11 27.5h21"/><path d="M41 11h21"/><path d="M41 13.5h21"/><path d="M41 16h21"/><path d="M44 22.5h18"/><path d="M41 25h21"/><path d="M41 27.5h21"/></g><rect x="37.2" y="8" width="1.6" height="22" fill="#7a7a7a"/><rect x="7.6" y="7.2" width="61" height="23.6" fill="none" stroke="#4a8fef" stroke-width="1.3"/><path d="M7.6 19h61" stroke="#4a8fef" stroke-width="1.3"/><rect x="6.0" y="5.6" width="3.2" height="3.2" fill="#4a8fef"/><rect x="6.0" y="17.4" width="3.2" height="3.2" fill="#4a8fef"/><rect x="6.0" y="29.2" width="3.2" height="3.2" fill="#4a8fef"/><rect x="67.0" y="5.6" width="3.2" height="3.2" fill="#4a8fef"/><rect x="67.0" y="17.4" width="3.2" height="3.2" fill="#4a8fef"/><rect x="67.0" y="29.2" width="3.2" height="3.2" fill="#4a8fef"/></svg>
<div style="left:818px;top:35.5px;width:1px;height:36.5px;background:#343434;"></div>
<div style="left:819px;top:35.5px;width:1px;height:36.5px;background:#555;"></div>
<svg style="left:824px;top:35.3px;" width="19" height="14" viewBox="0 0 19 14"><rect x="0.6" y="0.6" width="12" height="11.6" fill="#2e2e2e" stroke="#c8c8c8" stroke-width="1"/><rect x="0.6" y="0.6" width="12" height="2.6" fill="#d0d0d0"/><rect x="0.6" y="0.6" width="2.6" height="11.6" fill="#d0d0d0"/><path d="M0.6 5.8h2.6M0.6 8.8h2.6" stroke="#444" stroke-width="0.8"/><rect x="5" y="5.2" width="6.2" height="5.6" fill="#8e8e8e"/><polygon points="13.6,11.2 17,11.2 15.3,13.2" fill="#d0d0d0"/></svg>
<svg style="left:824px;top:58.2px;" width="19" height="14" viewBox="0 0 19 14"><rect x="0.6" y="0.6" width="12" height="11.6" fill="#2e2e2e" stroke="#c8c8c8" stroke-width="1"/><rect x="0.6" y="0.6" width="12" height="2.6" fill="#d0d0d0"/><path d="M0.6 5.6h12M0.6 8h12M0.6 10.3h12M4 3.2v9" stroke="#c8c8c8" stroke-width="0.9"/><polygon points="13.6,11.2 17,11.2 15.3,13.2" fill="#d0d0d0"/></svg>
<div style="left:847.2px;top:36px;width:130.5px;height:14.5px;background:#a4a4a4;border:1px solid #2b2b2b;overflow:hidden;box-shadow:inset 0 1px 0 #8e8e8e;"><div class="ft" style="left:2.6px;top:1.58px;font-size:9.9px;transform-origin:0 0;transform:scaleX(0.9186);">[Ohne]</div></div>
<div style="left:963.7px;top:36px;width:14px;height:14.5px;background:#595959;border:1px solid #2b2b2b;box-shadow:inset 0 1px 0 #6a6a6a;"></div>
<svg style="left:967.1px;top:40.65px;" width="7.4" height="5.2" viewBox="0 0 7.4 5.2"><polygon points="0,0 7.4,0 3.7,5.2" fill="#e6e6e6"/></svg>
<div style="left:847.2px;top:57px;width:130.5px;height:14.5px;background:#a4a4a4;border:1px solid #2b2b2b;overflow:hidden;box-shadow:inset 0 1px 0 #8e8e8e;"><div class="ft" style="left:2.6px;top:1.58px;font-size:9.9px;transform-origin:0 0;transform:scaleX(0.9272);">[Einfache Tabelle]</div></div>
<div style="left:963.7px;top:57px;width:14px;height:14.5px;background:#595959;border:1px solid #2b2b2b;box-shadow:inset 0 1px 0 #6a6a6a;"></div>
<svg style="left:967.1px;top:61.65px;" width="7.4" height="5.2" viewBox="0 0 7.4 5.2"><polygon points="0,0 7.4,0 3.7,5.2" fill="#e6e6e6"/></svg>
<div style="left:983.7px;top:35.5px;width:1px;height:36.5px;background:#343434;"></div>
<div style="left:984.7px;top:35.5px;width:1px;height:36.5px;background:#555;"></div>
<svg style="left:990px;top:36px;" width="13" height="14" viewBox="0 0 13 14"><rect x="0.5" y="0.5" width="12" height="13" fill="#2c2c2c" stroke="#d6d6d6" stroke-width="1"/><path d="M0.5 2.5h12M0.5 11.5h12" stroke="#dcdcdc" stroke-width="1"/><path d="M6.5 4v6M5 4.5h3M5 9.5h3" stroke="#dcdcdc" stroke-width="1" fill="none"/></svg>
<div style="left:1007.2px;top:36px;width:123.8px;height:14.5px;background:linear-gradient(#5c5c5c,#4b4b4b);border:1px solid #2b2b2b;"><div class="t" style="left:2.4px;top:1.4px;font-size:9.4px;color:#e2e2e2;letter-spacing:-0.267px;">Mindestens</div></div>
<div style="left:1116px;top:38px;width:1px;height:10.5px;background:#333;"></div>
<div style="left:1117px;top:38px;width:1px;height:10.5px;background:#6a6a6a;"></div>
<svg style="left:1121px;top:40.8px;" width="7" height="5" viewBox="0 0 7 5"><polygon points="0,0 7,0 3.5,5" fill="#e6e6e6"/></svg>
<div style="left:1137.4px;top:36px;width:13px;height:14.5px;background:#5a5a5a;border:1px solid #2f2f2f;"></div>
<div style="left:1138.4px;top:42.75px;width:11px;height:1px;background:#3a3a3a;"></div>
<svg style="left:1140.9px;top:38.5px;" width="6" height="3.5" viewBox="0 0 6 3.5"><polygon points="0,3.5 6,3.5 3.0,0" fill="#7c7c7c"/></svg>
<svg style="left:1140.9px;top:44.5px;" width="6" height="3.5" viewBox="0 0 6 3.5"><polygon points="0,0 6,0 3.0,3.5" fill="#7c7c7c"/></svg>
<div style="left:1152px;top:36px;width:53px;height:14.5px;background:#a4a4a4;border:1px solid #2b2b2b;overflow:hidden;box-shadow:inset 0 1px 0 #8e8e8e;"></div>
<svg style="left:990px;top:57px;" width="13" height="14" viewBox="0 0 13 14"><rect x="0.5" y="0.5" width="12" height="13" fill="#2c2c2c" stroke="#d6d6d6" stroke-width="1"/><path d="M2.5 0.5v13M10.5 0.5v13" stroke="#dcdcdc" stroke-width="1"/><path d="M4 7h5M4.5 5.5v3M8.5 5.5v3" stroke="#dcdcdc" stroke-width="1" fill="none"/></svg>
<div style="left:1006.5px;top:57px;width:13px;height:14.5px;background:#5a5a5a;border:1px solid #2f2f2f;"></div>
<div style="left:1007.5px;top:63.75px;width:11px;height:1px;background:#3a3a3a;"></div>
<svg style="left:1010.0px;top:59.5px;" width="6" height="3.5" viewBox="0 0 6 3.5"><polygon points="0,3.5 6,3.5 3.0,0" fill="#7c7c7c"/></svg>
<svg style="left:1010.0px;top:65.5px;" width="6" height="3.5" viewBox="0 0 6 3.5"><polygon points="0,0 6,0 3.0,3.5" fill="#7c7c7c"/></svg>
<div style="left:1021.5px;top:57px;width:54.3px;height:14.5px;background:#a4a4a4;border:1px solid #2b2b2b;overflow:hidden;box-shadow:inset 0 1px 0 #8e8e8e;"></div>
<div style="left:1210px;top:35.5px;width:1px;height:36.5px;background:#343434;"></div>
<div style="left:1211px;top:35.5px;width:1px;height:36.5px;background:#555;"></div>
<svg style="left:1216px;top:36px;" width="13" height="14" viewBox="0 0 13 14"><rect x="0.5" y="0.5" width="12" height="13" fill="#2c2c2c" stroke="#d6d6d6" stroke-width="1"/><path d="M3 7.5h7M3 9.5h7M3 11.5h7" stroke="#dcdcdc" stroke-width="1"/><path d="M6.5 2v3.5M4.8 3.8l1.7 1.8 1.7-1.8" stroke="#dcdcdc" stroke-width="1" fill="none"/></svg>
<div style="left:1232.5px;top:36px;width:13px;height:14.5px;background:#5a5a5a;border:1px solid #2f2f2f;"></div>
<div style="left:1233.5px;top:42.75px;width:11px;height:1px;background:#3a3a3a;"></div>
<svg style="left:1236.0px;top:38.5px;" width="6" height="3.5" viewBox="0 0 6 3.5"><polygon points="0,3.5 6,3.5 3.0,0" fill="#eaeaea"/></svg>
<svg style="left:1236.0px;top:44.5px;" width="6" height="3.5" viewBox="0 0 6 3.5"><polygon points="0,0 6,0 3.0,3.5" fill="#eaeaea"/></svg>
<div style="left:1247.3px;top:36px;width:45.5px;height:14.5px;background:#a4a4a4;border:1px solid #2b2b2b;overflow:hidden;box-shadow:inset 0 1px 0 #8e8e8e;"><div class="ft" style="left:2.6px;top:1.58px;font-size:9.9px;transform-origin:0 0;transform:scaleX(0.9819);">1,411 mm</div></div>
<svg style="left:1216px;top:57px;" width="13" height="14" viewBox="0 0 13 14"><rect x="0.5" y="0.5" width="12" height="13" fill="#2c2c2c" stroke="#d6d6d6" stroke-width="1"/><path d="M3 2.5h7M3 4.5h7M3 6.5h7" stroke="#dcdcdc" stroke-width="1"/><path d="M6.5 12v-3.5M4.8 10.2l1.7-1.8 1.7 1.8" stroke="#dcdcdc" stroke-width="1" fill="none"/></svg>
<div style="left:1232.5px;top:57px;width:13px;height:14.5px;background:#5a5a5a;border:1px solid #2f2f2f;"></div>
<div style="left:1233.5px;top:63.75px;width:11px;height:1px;background:#3a3a3a;"></div>
<svg style="left:1236.0px;top:59.5px;" width="6" height="3.5" viewBox="0 0 6 3.5"><polygon points="0,3.5 6,3.5 3.0,0" fill="#eaeaea"/></svg>
<svg style="left:1236.0px;top:65.5px;" width="6" height="3.5" viewBox="0 0 6 3.5"><polygon points="0,0 6,0 3.0,3.5" fill="#eaeaea"/></svg>
<div style="left:1247.3px;top:57px;width:45.5px;height:14.5px;background:#a4a4a4;border:1px solid #2b2b2b;overflow:hidden;box-shadow:inset 0 1px 0 #8e8e8e;"><div class="ft" style="left:2.6px;top:1.58px;font-size:9.9px;transform-origin:0 0;transform:scaleX(0.9819);">1,411 mm</div></div>
<div style="left:1299px;top:45px;width:18px;height:22px;background:#353535;"></div>
<svg style="left:1299px;top:45px;" width="18" height="22" viewBox="0 0 18 22"><rect x="6" y="3.6" width="6" height="8.5" rx="3" fill="none" stroke="#d8d8d8" stroke-width="1.7"/><rect x="6" y="9.8" width="6" height="8.5" rx="3" fill="none" stroke="#d8d8d8" stroke-width="1.7"/><rect x="8.1" y="8" width="1.8" height="6" fill="#d8d8d8"/></svg>
<svg style="left:1324px;top:36px;" width="13" height="14" viewBox="0 0 13 14"><rect x="0.5" y="0.5" width="12" height="13" fill="#2c2c2c" stroke="#d6d6d6" stroke-width="1"/><path d="M7 2.5h4M7 4.5h4M7 6.5h4M7 8.5h4M7 10.5h4" stroke="#dcdcdc" stroke-width="1"/><path d="M2 6.5h4M4 4.6l1.9 1.9-1.9 1.9" stroke="#dcdcdc" stroke-width="1" fill="none"/></svg>
<div style="left:1340.5px;top:36px;width:13px;height:14.5px;background:#5a5a5a;border:1px solid #2f2f2f;"></div>
<div style="left:1341.5px;top:42.75px;width:11px;height:1px;background:#3a3a3a;"></div>
<svg style="left:1344.0px;top:38.5px;" width="6" height="3.5" viewBox="0 0 6 3.5"><polygon points="0,3.5 6,3.5 3.0,0" fill="#eaeaea"/></svg>
<svg style="left:1344.0px;top:44.5px;" width="6" height="3.5" viewBox="0 0 6 3.5"><polygon points="0,0 6,0 3.0,3.5" fill="#eaeaea"/></svg>
<div style="left:1355.2px;top:36px;width:45.6px;height:14.5px;background:#a4a4a4;border:1px solid #2b2b2b;overflow:hidden;box-shadow:inset 0 1px 0 #8e8e8e;"><div class="ft" style="left:2.6px;top:1.58px;font-size:9.9px;transform-origin:0 0;transform:scaleX(0.9819);">1,411 mm</div></div>
<svg style="left:1324px;top:57px;" width="13" height="14" viewBox="0 0 13 14"><rect x="0.5" y="0.5" width="12" height="13" fill="#2c2c2c" stroke="#d6d6d6" stroke-width="1"/><path d="M2 2.5h4M2 4.5h4M2 6.5h4M2 8.5h4M2 10.5h4" stroke="#dcdcdc" stroke-width="1"/><path d="M11 7.5h-4M9 5.6l-1.9 1.9 1.9 1.9" stroke="#dcdcdc" stroke-width="1" fill="none"/></svg>
<div style="left:1340.5px;top:57px;width:13px;height:14.5px;background:#5a5a5a;border:1px solid #2f2f2f;"></div>
<div style="left:1341.5px;top:63.75px;width:11px;height:1px;background:#3a3a3a;"></div>
<svg style="left:1344.0px;top:59.5px;" width="6" height="3.5" viewBox="0 0 6 3.5"><polygon points="0,3.5 6,3.5 3.0,0" fill="#eaeaea"/></svg>
<svg style="left:1344.0px;top:65.5px;" width="6" height="3.5" viewBox="0 0 6 3.5"><polygon points="0,0 6,0 3.0,3.5" fill="#eaeaea"/></svg>
<div style="left:1355.2px;top:57px;width:45.6px;height:14.5px;background:#a4a4a4;border:1px solid #2b2b2b;overflow:hidden;box-shadow:inset 0 1px 0 #8e8e8e;"><div class="ft" style="left:2.6px;top:1.58px;font-size:9.9px;transform-origin:0 0;transform:scaleX(0.9819);">1,411 mm</div></div>
<div style="left:1407px;top:35.5px;width:1px;height:36.5px;background:#343434;"></div>
<div style="left:1408px;top:35.5px;width:1px;height:36.5px;background:#555;"></div>
<svg style="left:1871.5px;top:45px;" width="13" height="19" viewBox="0 0 13 19"><polygon points="7.4,0.6 0.8,9 5,8.4 3.2,17.4 10.8,5.6 6.8,6.2 8.8,0.6" fill="#cfcfcf"/></svg>
<div style="left:1891px;top:35px;width:1px;height:36px;background:#343434;"></div>
<div style="left:1892px;top:35px;width:1px;height:36px;background:#555;"></div>
<svg style="left:1898px;top:48.3px;" width="15" height="9" viewBox="0 0 15 9"><polygon points="0.5,2 5,2 2.75,4.6" fill="#d0d0d0"/><path d="M6 1.2h8M6 3.4h8M6 5.6h8M6 7.8h8" stroke="#d0d0d0" stroke-width="1"/></svg>
<div style="left:0px;top:78px;width:1757px;height:19.5px;background:#303030;"></div>
<div style="left:0px;top:78px;width:1757px;height:1px;background:#3c3c3c;"></div>
<div style="left:0px;top:78px;width:28.5px;height:11.5px;background:#2d2d2d;"></div>
<div style="left:0px;top:89.5px;width:28.5px;height:1px;background:#5a5a5a;"></div>
<div style="left:0px;top:90.5px;width:28.5px;height:8px;background:#474747;"></div>
<svg style="left:1px;top:80.5px;" width="9" height="7" viewBox="0 0 9 7"><polygon points="0,0.3 3.2,3.1 0,5.9" fill="#a8a8a8"/><polygon points="3.8,0.3 7,3.1 3.8,5.9" fill="#a8a8a8"/></svg>
<div style="left:3px;top:93.3px;width:1px;height:4px;background:#1c1c1c;"></div>
<div style="left:5px;top:93.3px;width:1px;height:4px;background:#1c1c1c;"></div>
<div style="left:7px;top:93.3px;width:1px;height:4px;background:#1c1c1c;"></div>
<div style="left:9px;top:93.3px;width:1px;height:4px;background:#1c1c1c;"></div>
<div style="left:11px;top:93.3px;width:1px;height:4px;background:#1c1c1c;"></div>
<div style="left:13px;top:93.3px;width:1px;height:4px;background:#1c1c1c;"></div>
<div style="left:15px;top:93.3px;width:1px;height:4px;background:#1c1c1c;"></div>
<div style="left:17px;top:93.3px;width:1px;height:4px;background:#1c1c1c;"></div>
<div style="left:19px;top:93.3px;width:1px;height:4px;background:#1c1c1c;"></div>
<div style="left:21px;top:93.3px;width:1px;height:4px;background:#1c1c1c;"></div>
<div style="left:28.5px;top:78px;width:2.5px;height:19px;background:#262626;"></div>
<div style="left:28px;top:97px;width:2px;height:942px;background:#3a3a3a;"></div>
<div style="left:30px;top:97px;width:1px;height:942px;background:#212121;"></div>
<div style="left:31px;top:78px;width:174.5px;height:19.5px;background:#474747;border-top:1px solid #585858;border-right:1px solid #2a2a2a;"></div>
<div class="t" style="left:40.2px;top:83.2px;font-size:10.8px;color:#e4e4e4;font-weight:bold;letter-spacing:0.008px;">*Speisekarte.indd @ 125 %</div>
<svg style="left:191.5px;top:84.5px;" width="8" height="7" viewBox="0 0 8 7"><path d="M1 0.8l5.2 5M6.2 0.8l-5.2 5" stroke="#e0e0e0" stroke-width="1.5"/></svg>
<div style="left:31px;top:97px;width:1709px;height:16px;background:#212121;"></div>
<div style="left:31px;top:113px;width:1709px;height:1px;background:#8e8e8e;"></div>
<div style="left:31px;top:114px;width:16px;height:910px;background:#212121;"></div>
<div style="left:46px;top:97px;width:1px;height:927px;background:#8e8e8e;"></div>
<svg style="left:31px;top:97px;" width="16" height="16" viewBox="0 0 16 16"><path d="M1 5.5h14" stroke="#d8d8d8" stroke-width="1" stroke-dasharray="1,1"/><path d="M4.5 1v14" stroke="#d8d8d8" stroke-width="1" stroke-dasharray="1,1"/><rect x="3" y="4" width="3" height="3" fill="#212121"/><path d="M4.5 3.6L6.4 5.5 4.5 7.4 2.6 5.5Z" fill="none" stroke="#e8e8e8" stroke-width="0.8"/></svg>
<svg style="left:31px;top:97px;" width="1709" height="16" viewBox="0 0 1709 16"><rect x="16.09" y="0" width="1" height="16" fill="#9c9c9c"/><rect x="20.82" y="13.6" width="1" height="2.4" fill="#939393"/><rect x="25.55" y="13.6" width="1" height="2.4" fill="#939393"/><rect x="30.27" y="13.6" width="1" height="2.4" fill="#939393"/><rect x="35.00" y="13.6" width="1" height="2.4" fill="#939393"/><rect x="39.72" y="11.6" width="1" height="4.4" fill="#999"/><rect x="44.45" y="13.6" width="1" height="2.4" fill="#939393"/><rect x="49.17" y="13.6" width="1" height="2.4" fill="#939393"/><rect x="53.90" y="13.6" width="1" height="2.4" fill="#939393"/><rect x="58.62" y="13.6" width="1" height="2.4" fill="#939393"/><rect x="63.35" y="0" width="1" height="16" fill="#9c9c9c"/><rect x="68.08" y="13.6" width="1" height="2.4" fill="#939393"/><rect x="72.80" y="13.6" width="1" height="2.4" fill="#939393"/><rect x="77.53" y="13.6" width="1" height="2.4" fill="#939393"/><rect x="82.25" y="13.6" width="1" height="2.4" fill="#939393"/><rect x="86.98" y="11.6" width="1" height="4.4" fill="#999"/><rect x="91.70" y="13.6" width="1" height="2.4" fill="#939393"/><rect x="96.43" y="13.6" width="1" height="2.4" fill="#939393"/><rect x="101.15" y="13.6" width="1" height="2.4" fill="#939393"/><rect x="105.88" y="13.6" width="1" height="2.4" fill="#939393"/><rect x="110.60" y="0" width="1" height="16" fill="#9c9c9c"/><rect x="115.33" y="13.6" width="1" height="2.4" fill="#939393"/><rect x="120.06" y="13.6" width="1" height="2.4" fill="#939393"/><rect x="124.78" y="13.6" width="1" height="2.4" fill="#939393"/><rect x="129.51" y="13.6" width="1" height="2.4" fill="#939393"/><rect x="134.23" y="11.6" width="1" height="4.4" fill="#999"/><rect x="138.96" y="13.6" width="1" height="2.4" fill="#939393"/><rect x="143.68" y="13.6" width="1" height="2.4" fill="#939393"/><rect x="148.41" y="13.6" width="1" height="2.4" fill="#939393"/><rect x="153.13" y="13.6" width="1" height="2.4" fill="#939393"/><rect x="157.86" y="0" width="1" height="16" fill="#9c9c9c"/><rect x="162.59" y="13.6" width="1" height="2.4" fill="#939393"/><rect x="167.31" y="13.6" width="1" height="2.4" fill="#939393"/><rect x="172.04" y="13.6" width="1" height="2.4" fill="#939393"/><rect x="176.76" y="13.6" width="1" height="2.4" fill="#939393"/><rect x="181.49" y="11.6" width="1" height="4.4" fill="#999"/><rect x="186.21" y="13.6" width="1" height="2.4" fill="#939393"/><rect x="190.94" y="13.6" width="1" height="2.4" fill="#939393"/><rect x="195.66" y="13.6" width="1" height="2.4" fill="#939393"/><rect x="200.39" y="13.6" width="1" height="2.4" fill="#939393"/><rect x="205.11" y="0" width="1" height="16" fill="#9c9c9c"/><rect x="209.84" y="13.6" width="1" height="2.4" fill="#939393"/><rect x="214.57" y="13.6" width="1" height="2.4" fill="#939393"/><rect x="219.29" y="13.6" width="1" height="2.4" fill="#939393"/><rect x="224.02" y="13.6" width="1" height="2.4" fill="#939393"/><rect x="228.74" y="11.6" width="1" height="4.4" fill="#999"/><rect x="233.47" y="13.6" width="1" height="2.4" fill="#939393"/><rect x="238.19" y="13.6" width="1" height="2.4" fill="#939393"/><rect x="242.92" y="13.6" width="1" height="2.4" fill="#939393"/><rect x="247.64" y="13.6" width="1" height="2.4" fill="#939393"/><rect x="252.37" y="0" width="1" height="16" fill="#9c9c9c"/><rect x="257.10" y="13.6" width="1" height="2.4" fill="#939393"/><rect x="261.82" y="13.6" width="1" height="2.4" fill="#939393"/><rect x="266.55" y="13.6" width="1" height="2.4" fill="#939393"/><rect x="271.27" y="13.6" width="1" height="2.4" fill="#939393"/><rect x="276.00" y="11.6" width="1" height="4.4" fill="#999"/><rect x="280.72" y="13.6" width="1" height="2.4" fill="#939393"/><rect x="285.45" y="13.6" width="1" height="2.4" fill="#939393"/><rect x="290.17" y="13.6" width="1" height="2.4" fill="#939393"/><rect x="294.90" y="13.6" width="1" height="2.4" fill="#939393"/><rect x="299.62" y="0" width="1" height="16" fill="#9c9c9c"/><rect x="304.35" y="13.6" width="1" height="2.4" fill="#939393"/><rect x="309.08" y="13.6" width="1" height="2.4" fill="#939393"/><rect x="313.80" y="13.6" width="1" height="2.4" fill="#939393"/><rect x="318.53" y="13.6" width="1" height="2.4" fill="#939393"/><rect x="323.25" y="11.6" width="1" height="4.4" fill="#999"/><rect x="327.98" y="13.6" width="1" height="2.4" fill="#939393"/><rect x="332.70" y="13.6" width="1" height="2.4" fill="#939393"/><rect x="337.43" y="13.6" width="1" height="2.4" fill="#939393"/><rect x="342.15" y="13.6" width="1" height="2.4" fill="#939393"/><rect x="346.88" y="0" width="1" height="16" fill="#9c9c9c"/><rect x="351.61" y="13.6" width="1" height="2.4" fill="#939393"/><rect x="356.33" y="13.6" width="1" height="2.4" fill="#939393"/><rect x="361.06" y="13.6" width="1" height="2.4" fill="#939393"/><rect x="365.78" y="13.6" width="1" height="2.4" fill="#939393"/><rect x="370.51" y="11.6" width="1" height="4.4" fill="#999"/><rect x="375.23" y="13.6" width="1" height="2.4" fill="#939393"/><rect x="379.96" y="13.6" width="1" height="2.4" fill="#939393"/><rect x="384.68" y="13.6" width="1" height="2.4" fill="#939393"/><rect x="389.41" y="13.6" width="1" height="2.4" fill="#939393"/><rect x="394.13" y="0" width="1" height="16" fill="#9c9c9c"/><rect x="398.86" y="13.6" width="1" height="2.4" fill="#939393"/><rect x="403.59" y="13.6" width="1" height="2.4" fill="#939393"/><rect x="408.31" y="13.6" width="1" height="2.4" fill="#939393"/><rect x="413.04" y="13.6" width="1" height="2.4" fill="#939393"/><rect x="417.76" y="11.6" width="1" height="4.4" fill="#999"/><rect x="422.49" y="13.6" width="1" height="2.4" fill="#939393"/><rect x="427.21" y="13.6" width="1" height="2.4" fill="#939393"/><rect x="431.94" y="13.6" width="1" height="2.4" fill="#939393"/><rect x="436.66" y="13.6" width="1" height="2.4" fill="#939393"/><rect x="441.39" y="0" width="1" height="16" fill="#9c9c9c"/><rect x="446.12" y="13.6" width="1" height="2.4" fill="#939393"/><rect x="450.84" y="13.6" width="1" height="2.4" fill="#939393"/><rect x="455.57" y="13.6" width="1" height="2.4" fill="#939393"/><rect x="460.29" y="13.6" width="1" height="2.4" fill="#939393"/><rect x="465.02" y="11.6" width="1" height="4.4" fill="#999"/><rect x="469.74" y="13.6" width="1" height="2.4" fill="#939393"/><rect x="474.47" y="13.6" width="1" height="2.4" fill="#939393"/><rect x="479.19" y="13.6" width="1" height="2.4" fill="#939393"/><rect x="483.92" y="13.6" width="1" height="2.4" fill="#939393"/><rect x="488.64" y="0" width="1" height="16" fill="#9c9c9c"/><rect x="493.37" y="13.6" width="1" height="2.4" fill="#939393"/><rect x="498.10" y="13.6" width="1" height="2.4" fill="#939393"/><rect x="502.82" y="13.6" width="1" height="2.4" fill="#939393"/><rect x="507.55" y="13.6" width="1" height="2.4" fill="#939393"/><rect x="512.27" y="11.6" width="1" height="4.4" fill="#999"/><rect x="517.00" y="13.6" width="1" height="2.4" fill="#939393"/><rect x="521.72" y="13.6" width="1" height="2.4" fill="#939393"/><rect x="526.45" y="13.6" width="1" height="2.4" fill="#939393"/><rect x="531.17" y="13.6" width="1" height="2.4" fill="#939393"/><rect x="535.90" y="0" width="1" height="16" fill="#9c9c9c"/><rect x="540.63" y="13.6" width="1" height="2.4" fill="#939393"/><rect x="545.35" y="13.6" width="1" height="2.4" fill="#939393"/><rect x="550.08" y="13.6" width="1" height="2.4" fill="#939393"/><rect x="554.80" y="13.6" width="1" height="2.4" fill="#939393"/><rect x="559.53" y="11.6" width="1" height="4.4" fill="#999"/><rect x="564.25" y="13.6" width="1" height="2.4" fill="#939393"/><rect x="568.98" y="13.6" width="1" height="2.4" fill="#939393"/><rect x="573.70" y="13.6" width="1" height="2.4" fill="#939393"/><rect x="578.43" y="13.6" width="1" height="2.4" fill="#939393"/><rect x="583.15" y="0" width="1" height="16" fill="#9c9c9c"/><rect x="587.88" y="13.6" width="1" height="2.4" fill="#939393"/><rect x="592.61" y="13.6" width="1" height="2.4" fill="#939393"/><rect x="597.33" y="13.6" width="1" height="2.4" fill="#939393"/><rect x="602.06" y="13.6" width="1" height="2.4" fill="#939393"/><rect x="606.78" y="11.6" width="1" height="4.4" fill="#999"/><rect x="611.51" y="13.6" width="1" height="2.4" fill="#939393"/><rect x="616.23" y="13.6" width="1" height="2.4" fill="#939393"/><rect x="620.96" y="13.6" width="1" height="2.4" fill="#939393"/><rect x="625.68" y="13.6" width="1" height="2.4" fill="#939393"/><rect x="630.41" y="0" width="1" height="16" fill="#9c9c9c"/><rect x="635.14" y="13.6" width="1" height="2.4" fill="#939393"/><rect x="639.86" y="13.6" width="1" height="2.4" fill="#939393"/><rect x="644.59" y="13.6" width="1" height="2.4" fill="#939393"/><rect x="649.31" y="13.6" width="1" height="2.4" fill="#939393"/><rect x="654.04" y="11.6" width="1" height="4.4" fill="#999"/><rect x="658.76" y="13.6" width="1" height="2.4" fill="#939393"/><rect x="663.49" y="13.6" width="1" height="2.4" fill="#939393"/><rect x="668.21" y="13.6" width="1" height="2.4" fill="#939393"/><rect x="672.94" y="13.6" width="1" height="2.4" fill="#939393"/><rect x="677.66" y="0" width="1" height="16" fill="#9c9c9c"/><rect x="682.39" y="13.6" width="1" height="2.4" fill="#939393"/><rect x="687.12" y="13.6" width="1" height="2.4" fill="#939393"/><rect x="691.84" y="13.6" width="1" height="2.4" fill="#939393"/><rect x="696.57" y="13.6" width="1" height="2.4" fill="#939393"/><rect x="701.29" y="11.6" width="1" height="4.4" fill="#999"/><rect x="706.02" y="13.6" width="1" height="2.4" fill="#939393"/><rect x="710.74" y="13.6" width="1" height="2.4" fill="#939393"/><rect x="715.47" y="13.6" width="1" height="2.4" fill="#939393"/><rect x="720.19" y="13.6" width="1" height="2.4" fill="#939393"/><rect x="724.92" y="0" width="1" height="16" fill="#9c9c9c"/><rect x="729.65" y="13.6" width="1" height="2.4" fill="#939393"/><rect x="734.37" y="13.6" width="1" height="2.4" fill="#939393"/><rect x="739.10" y="13.6" width="1" height="2.4" fill="#939393"/><rect x="743.82" y="13.6" width="1" height="2.4" fill="#939393"/><rect x="748.55" y="11.6" width="1" height="4.4" fill="#999"/><rect x="753.27" y="13.6" width="1" height="2.4" fill="#939393"/><rect x="758.00" y="13.6" width="1" height="2.4" fill="#939393"/><rect x="762.72" y="13.6" width="1" height="2.4" fill="#939393"/><rect x="767.45" y="13.6" width="1" height="2.4" fill="#939393"/><rect x="772.17" y="0" width="1" height="16" fill="#9c9c9c"/><rect x="776.90" y="13.6" width="1" height="2.4" fill="#939393"/><rect x="781.63" y="13.6" width="1" height="2.4" fill="#939393"/><rect x="786.35" y="13.6" width="1" height="2.4" fill="#939393"/><rect x="791.08" y="13.6" width="1" height="2.4" fill="#939393"/><rect x="795.80" y="11.6" width="1" height="4.4" fill="#999"/><rect x="800.53" y="13.6" width="1" height="2.4" fill="#939393"/><rect x="805.25" y="13.6" width="1" height="2.4" fill="#939393"/><rect x="809.98" y="13.6" width="1" height="2.4" fill="#939393"/><rect x="814.70" y="13.6" width="1" height="2.4" fill="#939393"/><rect x="819.43" y="0" width="1" height="16" fill="#9c9c9c"/><rect x="824.16" y="13.6" width="1" height="2.4" fill="#939393"/><rect x="828.88" y="13.6" width="1" height="2.4" fill="#939393"/><rect x="833.61" y="13.6" width="1" height="2.4" fill="#939393"/><rect x="838.33" y="13.6" width="1" height="2.4" fill="#939393"/><rect x="843.06" y="11.6" width="1" height="4.4" fill="#999"/><rect x="847.78" y="13.6" width="1" height="2.4" fill="#939393"/><rect x="852.51" y="13.6" width="1" height="2.4" fill="#939393"/><rect x="857.23" y="13.6" width="1" height="2.4" fill="#939393"/><rect x="861.96" y="13.6" width="1" height="2.4" fill="#939393"/><rect x="866.68" y="0" width="1" height="16" fill="#9c9c9c"/><rect x="871.41" y="13.6" width="1" height="2.4" fill="#939393"/><rect x="876.14" y="13.6" width="1" height="2.4" fill="#939393"/><rect x="880.86" y="13.6" width="1" height="2.4" fill="#939393"/><rect x="885.59" y="13.6" width="1" height="2.4" fill="#939393"/><rect x="890.31" y="11.6" width="1" height="4.4" fill="#999"/><rect x="895.04" y="13.6" width="1" height="2.4" fill="#939393"/><rect x="899.76" y="13.6" width="1" height="2.4" fill="#939393"/><rect x="904.49" y="13.6" width="1" height="2.4" fill="#939393"/><rect x="909.21" y="13.6" width="1" height="2.4" fill="#939393"/><rect x="913.94" y="0" width="1" height="16" fill="#9c9c9c"/><rect x="918.67" y="13.6" width="1" height="2.4" fill="#939393"/><rect x="923.39" y="13.6" width="1" height="2.4" fill="#939393"/><rect x="928.12" y="13.6" width="1" height="2.4" fill="#939393"/><rect x="932.84" y="13.6" width="1" height="2.4" fill="#939393"/><rect x="937.57" y="11.6" width="1" height="4.4" fill="#999"/><rect x="942.29" y="13.6" width="1" height="2.4" fill="#939393"/><rect x="947.02" y="13.6" width="1" height="2.4" fill="#939393"/><rect x="951.74" y="13.6" width="1" height="2.4" fill="#939393"/><rect x="956.47" y="13.6" width="1" height="2.4" fill="#939393"/><rect x="961.19" y="0" width="1" height="16" fill="#9c9c9c"/><rect x="965.92" y="13.6" width="1" height="2.4" fill="#939393"/><rect x="970.65" y="13.6" width="1" height="2.4" fill="#939393"/><rect x="975.37" y="13.6" width="1" height="2.4" fill="#939393"/><rect x="980.10" y="13.6" width="1" height="2.4" fill="#939393"/><rect x="984.82" y="11.6" width="1" height="4.4" fill="#999"/><rect x="989.55" y="13.6" width="1" height="2.4" fill="#939393"/><rect x="994.27" y="13.6" width="1" height="2.4" fill="#939393"/><rect x="999.00" y="13.6" width="1" height="2.4" fill="#939393"/><rect x="1003.72" y="13.6" width="1" height="2.4" fill="#939393"/><rect x="1008.45" y="0" width="1" height="16" fill="#9c9c9c"/><rect x="1013.18" y="13.6" width="1" height="2.4" fill="#939393"/><rect x="1017.90" y="13.6" width="1" height="2.4" fill="#939393"/><rect x="1022.63" y="13.6" width="1" height="2.4" fill="#939393"/><rect x="1027.35" y="13.6" width="1" height="2.4" fill="#939393"/><rect x="1032.08" y="11.6" width="1" height="4.4" fill="#999"/><rect x="1036.80" y="13.6" width="1" height="2.4" fill="#939393"/><rect x="1041.53" y="13.6" width="1" height="2.4" fill="#939393"/><rect x="1046.25" y="13.6" width="1" height="2.4" fill="#939393"/><rect x="1050.98" y="13.6" width="1" height="2.4" fill="#939393"/><rect x="1055.70" y="0" width="1" height="16" fill="#9c9c9c"/><rect x="1060.43" y="13.6" width="1" height="2.4" fill="#939393"/><rect x="1065.16" y="13.6" width="1" height="2.4" fill="#939393"/><rect x="1069.88" y="13.6" width="1" height="2.4" fill="#939393"/><rect x="1074.61" y="13.6" width="1" height="2.4" fill="#939393"/><rect x="1079.33" y="11.6" width="1" height="4.4" fill="#999"/><rect x="1084.06" y="13.6" width="1" height="2.4" fill="#939393"/><rect x="1088.78" y="13.6" width="1" height="2.4" fill="#939393"/><rect x="1093.51" y="13.6" width="1" height="2.4" fill="#939393"/><rect x="1098.23" y="13.6" width="1" height="2.4" fill="#939393"/><rect x="1102.96" y="0" width="1" height="16" fill="#9c9c9c"/><rect x="1107.69" y="13.6" width="1" height="2.4" fill="#939393"/><rect x="1112.41" y="13.6" width="1" height="2.4" fill="#939393"/><rect x="1117.14" y="13.6" width="1" height="2.4" fill="#939393"/><rect x="1121.86" y="13.6" width="1" height="2.4" fill="#939393"/><rect x="1126.59" y="11.6" width="1" height="4.4" fill="#999"/><rect x="1131.31" y="13.6" width="1" height="2.4" fill="#939393"/><rect x="1136.04" y="13.6" width="1" height="2.4" fill="#939393"/><rect x="1140.76" y="13.6" width="1" height="2.4" fill="#939393"/><rect x="1145.49" y="13.6" width="1" height="2.4" fill="#939393"/><rect x="1150.22" y="0" width="1" height="16" fill="#9c9c9c"/><rect x="1154.94" y="13.6" width="1" height="2.4" fill="#939393"/><rect x="1159.67" y="13.6" width="1" height="2.4" fill="#939393"/><rect x="1164.39" y="13.6" width="1" height="2.4" fill="#939393"/><rect x="1169.12" y="13.6" width="1" height="2.4" fill="#939393"/><rect x="1173.84" y="11.6" width="1" height="4.4" fill="#999"/><rect x="1178.57" y="13.6" width="1" height="2.4" fill="#939393"/><rect x="1183.29" y="13.6" width="1" height="2.4" fill="#939393"/><rect x="1188.02" y="13.6" width="1" height="2.4" fill="#939393"/><rect x="1192.74" y="13.6" width="1" height="2.4" fill="#939393"/><rect x="1197.47" y="0" width="1" height="16" fill="#9c9c9c"/><rect x="1202.20" y="13.6" width="1" height="2.4" fill="#939393"/><rect x="1206.92" y="13.6" width="1" height="2.4" fill="#939393"/><rect x="1211.65" y="13.6" width="1" height="2.4" fill="#939393"/><rect x="1216.37" y="13.6" width="1" height="2.4" fill="#939393"/><rect x="1221.10" y="11.6" width="1" height="4.4" fill="#999"/><rect x="1225.82" y="13.6" width="1" height="2.4" fill="#939393"/><rect x="1230.55" y="13.6" width="1" height="2.4" fill="#939393"/><rect x="1235.27" y="13.6" width="1" height="2.4" fill="#939393"/><rect x="1240.00" y="13.6" width="1" height="2.4" fill="#939393"/><rect x="1244.72" y="0" width="1" height="16" fill="#9c9c9c"/><rect x="1249.45" y="13.6" width="1" height="2.4" fill="#939393"/><rect x="1254.18" y="13.6" width="1" height="2.4" fill="#939393"/><rect x="1258.90" y="13.6" width="1" height="2.4" fill="#939393"/><rect x="1263.63" y="13.6" width="1" height="2.4" fill="#939393"/><rect x="1268.35" y="11.6" width="1" height="4.4" fill="#999"/><rect x="1273.08" y="13.6" width="1" height="2.4" fill="#939393"/><rect x="1277.80" y="13.6" width="1" height="2.4" fill="#939393"/><rect x="1282.53" y="13.6" width="1" height="2.4" fill="#939393"/><rect x="1287.25" y="13.6" width="1" height="2.4" fill="#939393"/><rect x="1291.98" y="0" width="1" height="16" fill="#9c9c9c"/><rect x="1296.71" y="13.6" width="1" height="2.4" fill="#939393"/><rect x="1301.43" y="13.6" width="1" height="2.4" fill="#939393"/><rect x="1306.16" y="13.6" width="1" height="2.4" fill="#939393"/><rect x="1310.88" y="13.6" width="1" height="2.4" fill="#939393"/><rect x="1315.61" y="11.6" width="1" height="4.4" fill="#999"/><rect x="1320.33" y="13.6" width="1" height="2.4" fill="#939393"/><rect x="1325.06" y="13.6" width="1" height="2.4" fill="#939393"/><rect x="1329.78" y="13.6" width="1" height="2.4" fill="#939393"/><rect x="1334.51" y="13.6" width="1" height="2.4" fill="#939393"/><rect x="1339.24" y="0" width="1" height="16" fill="#9c9c9c"/><rect x="1343.96" y="13.6" width="1" height="2.4" fill="#939393"/><rect x="1348.69" y="13.6" width="1" height="2.4" fill="#939393"/><rect x="1353.41" y="13.6" width="1" height="2.4" fill="#939393"/><rect x="1358.14" y="13.6" width="1" height="2.4" fill="#939393"/><rect x="1362.86" y="11.6" width="1" height="4.4" fill="#999"/><rect x="1367.59" y="13.6" width="1" height="2.4" fill="#939393"/><rect x="1372.31" y="13.6" width="1" height="2.4" fill="#939393"/><rect x="1377.04" y="13.6" width="1" height="2.4" fill="#939393"/><rect x="1381.76" y="13.6" width="1" height="2.4" fill="#939393"/><rect x="1386.49" y="0" width="1" height="16" fill="#9c9c9c"/><rect x="1391.22" y="13.6" width="1" height="2.4" fill="#939393"/><rect x="1395.94" y="13.6" width="1" height="2.4" fill="#939393"/><rect x="1400.67" y="13.6" width="1" height="2.4" fill="#939393"/><rect x="1405.39" y="13.6" width="1" height="2.4" fill="#939393"/><rect x="1410.12" y="11.6" width="1" height="4.4" fill="#999"/><rect x="1414.84" y="13.6" width="1" height="2.4" fill="#939393"/><rect x="1419.57" y="13.6" width="1" height="2.4" fill="#939393"/><rect x="1424.29" y="13.6" width="1" height="2.4" fill="#939393"/><rect x="1429.02" y="13.6" width="1" height="2.4" fill="#939393"/><rect x="1433.74" y="0" width="1" height="16" fill="#9c9c9c"/><rect x="1438.47" y="13.6" width="1" height="2.4" fill="#939393"/><rect x="1443.20" y="13.6" width="1" height="2.4" fill="#939393"/><rect x="1447.92" y="13.6" width="1" height="2.4" fill="#939393"/><rect x="1452.65" y="13.6" width="1" height="2.4" fill="#939393"/><rect x="1457.37" y="11.6" width="1" height="4.4" fill="#999"/><rect x="1462.10" y="13.6" width="1" height="2.4" fill="#939393"/><rect x="1466.82" y="13.6" width="1" height="2.4" fill="#939393"/><rect x="1471.55" y="13.6" width="1" height="2.4" fill="#939393"/><rect x="1476.27" y="13.6" width="1" height="2.4" fill="#939393"/><rect x="1481.00" y="0" width="1" height="16" fill="#9c9c9c"/><rect x="1485.73" y="13.6" width="1" height="2.4" fill="#939393"/><rect x="1490.45" y="13.6" width="1" height="2.4" fill="#939393"/><rect x="1495.18" y="13.6" width="1" height="2.4" fill="#939393"/><rect x="1499.90" y="13.6" width="1" height="2.4" fill="#939393"/><rect x="1504.63" y="11.6" width="1" height="4.4" fill="#999"/><rect x="1509.35" y="13.6" width="1" height="2.4" fill="#939393"/><rect x="1514.08" y="13.6" width="1" height="2.4" fill="#939393"/><rect x="1518.80" y="13.6" width="1" height="2.4" fill="#939393"/><rect x="1523.53" y="13.6" width="1" height="2.4" fill="#939393"/><rect x="1528.26" y="0" width="1" height="16" fill="#9c9c9c"/><rect x="1532.98" y="13.6" width="1" height="2.4" fill="#939393"/><rect x="1537.71" y="13.6" width="1" height="2.4" fill="#939393"/><rect x="1542.43" y="13.6" width="1" height="2.4" fill="#939393"/><rect x="1547.16" y="13.6" width="1" height="2.4" fill="#939393"/><rect x="1551.88" y="11.6" width="1" height="4.4" fill="#999"/><rect x="1556.61" y="13.6" width="1" height="2.4" fill="#939393"/><rect x="1561.33" y="13.6" width="1" height="2.4" fill="#939393"/><rect x="1566.06" y="13.6" width="1" height="2.4" fill="#939393"/><rect x="1570.78" y="13.6" width="1" height="2.4" fill="#939393"/><rect x="1575.51" y="0" width="1" height="16" fill="#9c9c9c"/><rect x="1580.24" y="13.6" width="1" height="2.4" fill="#939393"/><rect x="1584.96" y="13.6" width="1" height="2.4" fill="#939393"/><rect x="1589.69" y="13.6" width="1" height="2.4" fill="#939393"/><rect x="1594.41" y="13.6" width="1" height="2.4" fill="#939393"/><rect x="1599.14" y="11.6" width="1" height="4.4" fill="#999"/><rect x="1603.86" y="13.6" width="1" height="2.4" fill="#939393"/><rect x="1608.59" y="13.6" width="1" height="2.4" fill="#939393"/><rect x="1613.31" y="13.6" width="1" height="2.4" fill="#939393"/><rect x="1618.04" y="13.6" width="1" height="2.4" fill="#939393"/><rect x="1622.76" y="0" width="1" height="16" fill="#9c9c9c"/><rect x="1627.49" y="13.6" width="1" height="2.4" fill="#939393"/><rect x="1632.22" y="13.6" width="1" height="2.4" fill="#939393"/><rect x="1636.94" y="13.6" width="1" height="2.4" fill="#939393"/><rect x="1641.67" y="13.6" width="1" height="2.4" fill="#939393"/><rect x="1646.39" y="11.6" width="1" height="4.4" fill="#999"/><rect x="1651.12" y="13.6" width="1" height="2.4" fill="#939393"/><rect x="1655.84" y="13.6" width="1" height="2.4" fill="#939393"/><rect x="1660.57" y="13.6" width="1" height="2.4" fill="#939393"/><rect x="1665.29" y="13.6" width="1" height="2.4" fill="#939393"/><rect x="1670.02" y="0" width="1" height="16" fill="#9c9c9c"/><rect x="1674.75" y="13.6" width="1" height="2.4" fill="#939393"/><rect x="1679.47" y="13.6" width="1" height="2.4" fill="#939393"/><rect x="1684.20" y="13.6" width="1" height="2.4" fill="#939393"/><rect x="1688.92" y="13.6" width="1" height="2.4" fill="#939393"/><rect x="1693.65" y="11.6" width="1" height="4.4" fill="#999"/><rect x="1698.37" y="13.6" width="1" height="2.4" fill="#939393"/><rect x="1703.10" y="13.6" width="1" height="2.4" fill="#939393"/><path d="M370.5 1v15" stroke="#000" stroke-width="1"/><path d="M370.5 2v14" stroke="#f4f4f4" stroke-width="1" stroke-dasharray="1,1"/></svg>
<div class="t" style="left:49.3px;top:100.2px;font-size:9px;color:#d6d6d6;">110</div>
<div class="t" style="left:96.5px;top:100.2px;font-size:9px;color:#d6d6d6;">100</div>
<div class="t" style="left:143.8px;top:100.2px;font-size:9px;color:#d6d6d6;">90</div>
<div class="t" style="left:191.1px;top:100.2px;font-size:9px;color:#d6d6d6;">80</div>
<div class="t" style="left:238.3px;top:100.2px;font-size:9px;color:#d6d6d6;">70</div>
<div class="t" style="left:285.6px;top:100.2px;font-size:9px;color:#d6d6d6;">60</div>
<div class="t" style="left:332.8px;top:100.2px;font-size:9px;color:#d6d6d6;">50</div>
<div class="t" style="left:380.1px;top:100.2px;font-size:9px;color:#d6d6d6;">40</div>
<div class="t" style="left:427.3px;top:100.2px;font-size:9px;color:#d6d6d6;">30</div>
<div class="t" style="left:474.6px;top:100.2px;font-size:9px;color:#d6d6d6;">20</div>
<div class="t" style="left:521.8px;top:100.2px;font-size:9px;color:#d6d6d6;">10</div>
<div class="t" style="left:569.1px;top:100.2px;font-size:9px;color:#d6d6d6;">0</div>
<div class="t" style="left:616.4px;top:100.2px;font-size:9px;color:#d6d6d6;">10</div>
<div class="t" style="left:663.6px;top:100.2px;font-size:9px;color:#d6d6d6;">20</div>
<div class="t" style="left:710.9px;top:100.2px;font-size:9px;color:#d6d6d6;">30</div>
<div class="t" style="left:758.1px;top:100.2px;font-size:9px;color:#d6d6d6;">40</div>
<div class="t" style="left:805.4px;top:100.2px;font-size:9px;color:#d6d6d6;">50</div>
<div class="t" style="left:852.6px;top:100.2px;font-size:9px;color:#d6d6d6;">60</div>
<div class="t" style="left:899.9px;top:100.2px;font-size:9px;color:#d6d6d6;">70</div>
<div class="t" style="left:947.1px;top:100.2px;font-size:9px;color:#d6d6d6;">80</div>
<div class="t" style="left:994.4px;top:100.2px;font-size:9px;color:#d6d6d6;">90</div>
<div class="t" style="left:1041.7px;top:100.2px;font-size:9px;color:#d6d6d6;">100</div>
<div class="t" style="left:1088.9px;top:100.2px;font-size:9px;color:#d6d6d6;">110</div>
<div class="t" style="left:1136.2px;top:100.2px;font-size:9px;color:#d6d6d6;">120</div>
<div class="t" style="left:1183.4px;top:100.2px;font-size:9px;color:#d6d6d6;">130</div>
<div class="t" style="left:1230.7px;top:100.2px;font-size:9px;color:#d6d6d6;">140</div>
<div class="t" style="left:1277.9px;top:100.2px;font-size:9px;color:#d6d6d6;">150</div>
<div class="t" style="left:1325.2px;top:100.2px;font-size:9px;color:#d6d6d6;">160</div>
<div class="t" style="left:1372.4px;top:100.2px;font-size:9px;color:#d6d6d6;">170</div>
<div class="t" style="left:1419.7px;top:100.2px;font-size:9px;color:#d6d6d6;">180</div>
<div class="t" style="left:1466.9px;top:100.2px;font-size:9px;color:#d6d6d6;">190</div>
<div class="t" style="left:1514.2px;top:100.2px;font-size:9px;color:#d6d6d6;">200</div>
<div class="t" style="left:1561.5px;top:100.2px;font-size:9px;color:#d6d6d6;">210</div>
<div class="t" style="left:1608.7px;top:100.2px;font-size:9px;color:#d6d6d6;">220</div>
<div class="t" style="left:1656.0px;top:100.2px;font-size:9px;color:#d6d6d6;">230</div>
<div class="t" style="left:1703.2px;top:100.2px;font-size:9px;color:#d6d6d6;">240</div>
<svg style="left:31px;top:114px;" width="16" height="910" viewBox="0 0 16 910"><rect x="13" y="0.56" width="2.4" height="1" fill="#939393"/><rect x="13" y="5.29" width="2.4" height="1" fill="#939393"/><rect x="13" y="10.01" width="2.4" height="1" fill="#939393"/><rect x="11" y="14.74" width="4.4" height="1" fill="#999"/><rect x="13" y="19.46" width="2.4" height="1" fill="#939393"/><rect x="13" y="24.19" width="2.4" height="1" fill="#939393"/><rect x="13" y="28.91" width="2.4" height="1" fill="#939393"/><rect x="13" y="33.64" width="2.4" height="1" fill="#939393"/><rect x="0" y="38.37" width="16" height="1" fill="#9c9c9c"/><rect x="13" y="43.09" width="2.4" height="1" fill="#939393"/><rect x="13" y="47.82" width="2.4" height="1" fill="#939393"/><rect x="13" y="52.54" width="2.4" height="1" fill="#939393"/><rect x="13" y="57.27" width="2.4" height="1" fill="#939393"/><rect x="11" y="61.99" width="4.4" height="1" fill="#999"/><rect x="13" y="66.72" width="2.4" height="1" fill="#939393"/><rect x="13" y="71.44" width="2.4" height="1" fill="#939393"/><rect x="13" y="76.17" width="2.4" height="1" fill="#939393"/><rect x="13" y="80.89" width="2.4" height="1" fill="#939393"/><rect x="0" y="85.62" width="16" height="1" fill="#9c9c9c"/><rect x="13" y="90.35" width="2.4" height="1" fill="#939393"/><rect x="13" y="95.07" width="2.4" height="1" fill="#939393"/><rect x="13" y="99.80" width="2.4" height="1" fill="#939393"/><rect x="13" y="104.52" width="2.4" height="1" fill="#939393"/><rect x="11" y="109.25" width="4.4" height="1" fill="#999"/><rect x="13" y="113.97" width="2.4" height="1" fill="#939393"/><rect x="13" y="118.70" width="2.4" height="1" fill="#939393"/><rect x="13" y="123.42" width="2.4" height="1" fill="#939393"/><rect x="13" y="128.15" width="2.4" height="1" fill="#939393"/><rect x="0" y="132.88" width="16" height="1" fill="#9c9c9c"/><rect x="13" y="137.60" width="2.4" height="1" fill="#939393"/><rect x="13" y="142.33" width="2.4" height="1" fill="#939393"/><rect x="13" y="147.05" width="2.4" height="1" fill="#939393"/><rect x="13" y="151.78" width="2.4" height="1" fill="#939393"/><rect x="11" y="156.50" width="4.4" height="1" fill="#999"/><rect x="13" y="161.23" width="2.4" height="1" fill="#939393"/><rect x="13" y="165.95" width="2.4" height="1" fill="#939393"/><rect x="13" y="170.68" width="2.4" height="1" fill="#939393"/><rect x="13" y="175.40" width="2.4" height="1" fill="#939393"/><rect x="0" y="180.13" width="16" height="1" fill="#9c9c9c"/><rect x="13" y="184.86" width="2.4" height="1" fill="#939393"/><rect x="13" y="189.58" width="2.4" height="1" fill="#939393"/><rect x="13" y="194.31" width="2.4" height="1" fill="#939393"/><rect x="13" y="199.03" width="2.4" height="1" fill="#939393"/><rect x="11" y="203.76" width="4.4" height="1" fill="#999"/><rect x="13" y="208.48" width="2.4" height="1" fill="#939393"/><rect x="13" y="213.21" width="2.4" height="1" fill="#939393"/><rect x="13" y="217.93" width="2.4" height="1" fill="#939393"/><rect x="13" y="222.66" width="2.4" height="1" fill="#939393"/><rect x="0" y="227.39" width="16" height="1" fill="#9c9c9c"/><rect x="13" y="232.11" width="2.4" height="1" fill="#939393"/><rect x="13" y="236.84" width="2.4" height="1" fill="#939393"/><rect x="13" y="241.56" width="2.4" height="1" fill="#939393"/><rect x="13" y="246.29" width="2.4" height="1" fill="#939393"/><rect x="11" y="251.01" width="4.4" height="1" fill="#999"/><rect x="13" y="255.74" width="2.4" height="1" fill="#939393"/><rect x="13" y="260.46" width="2.4" height="1" fill="#939393"/><rect x="13" y="265.19" width="2.4" height="1" fill="#939393"/><rect x="13" y="269.91" width="2.4" height="1" fill="#939393"/><rect x="0" y="274.64" width="16" height="1" fill="#9c9c9c"/><rect x="13" y="279.37" width="2.4" height="1" fill="#939393"/><rect x="13" y="284.09" width="2.4" height="1" fill="#939393"/><rect x="13" y="288.82" width="2.4" height="1" fill="#939393"/><rect x="13" y="293.54" width="2.4" height="1" fill="#939393"/><rect x="11" y="298.27" width="4.4" height="1" fill="#999"/><rect x="13" y="302.99" width="2.4" height="1" fill="#939393"/><rect x="13" y="307.72" width="2.4" height="1" fill="#939393"/><rect x="13" y="312.44" width="2.4" height="1" fill="#939393"/><rect x="13" y="317.17" width="2.4" height="1" fill="#939393"/><rect x="0" y="321.90" width="16" height="1" fill="#9c9c9c"/><rect x="13" y="326.62" width="2.4" height="1" fill="#939393"/><rect x="13" y="331.35" width="2.4" height="1" fill="#939393"/><rect x="13" y="336.07" width="2.4" height="1" fill="#939393"/><rect x="13" y="340.80" width="2.4" height="1" fill="#939393"/><rect x="11" y="345.52" width="4.4" height="1" fill="#999"/><rect x="13" y="350.25" width="2.4" height="1" fill="#939393"/><rect x="13" y="354.97" width="2.4" height="1" fill="#939393"/><rect x="13" y="359.70" width="2.4" height="1" fill="#939393"/><rect x="13" y="364.42" width="2.4" height="1" fill="#939393"/><rect x="0" y="369.15" width="16" height="1" fill="#9c9c9c"/><rect x="13" y="373.88" width="2.4" height="1" fill="#939393"/><rect x="13" y="378.60" width="2.4" height="1" fill="#939393"/><rect x="13" y="383.33" width="2.4" height="1" fill="#939393"/><rect x="13" y="388.05" width="2.4" height="1" fill="#939393"/><rect x="11" y="392.78" width="4.4" height="1" fill="#999"/><rect x="13" y="397.50" width="2.4" height="1" fill="#939393"/><rect x="13" y="402.23" width="2.4" height="1" fill="#939393"/><rect x="13" y="406.95" width="2.4" height="1" fill="#939393"/><rect x="13" y="411.68" width="2.4" height="1" fill="#939393"/><rect x="0" y="416.41" width="16" height="1" fill="#9c9c9c"/><rect x="13" y="421.13" width="2.4" height="1" fill="#939393"/><rect x="13" y="425.86" width="2.4" height="1" fill="#939393"/><rect x="13" y="430.58" width="2.4" height="1" fill="#939393"/><rect x="13" y="435.31" width="2.4" height="1" fill="#939393"/><rect x="11" y="440.03" width="4.4" height="1" fill="#999"/><rect x="13" y="444.76" width="2.4" height="1" fill="#939393"/><rect x="13" y="449.48" width="2.4" height="1" fill="#939393"/><rect x="13" y="454.21" width="2.4" height="1" fill="#939393"/><rect x="13" y="458.93" width="2.4" height="1" fill="#939393"/><rect x="0" y="463.66" width="16" height="1" fill="#9c9c9c"/><rect x="13" y="468.39" width="2.4" height="1" fill="#939393"/><rect x="13" y="473.11" width="2.4" height="1" fill="#939393"/><rect x="13" y="477.84" width="2.4" height="1" fill="#939393"/><rect x="13" y="482.56" width="2.4" height="1" fill="#939393"/><rect x="11" y="487.29" width="4.4" height="1" fill="#999"/><rect x="13" y="492.01" width="2.4" height="1" fill="#939393"/><rect x="13" y="496.74" width="2.4" height="1" fill="#939393"/><rect x="13" y="501.46" width="2.4" height="1" fill="#939393"/><rect x="13" y="506.19" width="2.4" height="1" fill="#939393"/><rect x="0" y="510.92" width="16" height="1" fill="#9c9c9c"/><rect x="13" y="515.64" width="2.4" height="1" fill="#939393"/><rect x="13" y="520.37" width="2.4" height="1" fill="#939393"/><rect x="13" y="525.09" width="2.4" height="1" fill="#939393"/><rect x="13" y="529.82" width="2.4" height="1" fill="#939393"/><rect x="11" y="534.54" width="4.4" height="1" fill="#999"/><rect x="13" y="539.27" width="2.4" height="1" fill="#939393"/><rect x="13" y="543.99" width="2.4" height="1" fill="#939393"/><rect x="13" y="548.72" width="2.4" height="1" fill="#939393"/><rect x="13" y="553.44" width="2.4" height="1" fill="#939393"/><rect x="0" y="558.17" width="16" height="1" fill="#9c9c9c"/><rect x="13" y="562.90" width="2.4" height="1" fill="#939393"/><rect x="13" y="567.62" width="2.4" height="1" fill="#939393"/><rect x="13" y="572.35" width="2.4" height="1" fill="#939393"/><rect x="13" y="577.07" width="2.4" height="1" fill="#939393"/><rect x="11" y="581.80" width="4.4" height="1" fill="#999"/><rect x="13" y="586.52" width="2.4" height="1" fill="#939393"/><rect x="13" y="591.25" width="2.4" height="1" fill="#939393"/><rect x="13" y="595.97" width="2.4" height="1" fill="#939393"/><rect x="13" y="600.70" width="2.4" height="1" fill="#939393"/><rect x="0" y="605.43" width="16" height="1" fill="#9c9c9c"/><rect x="13" y="610.15" width="2.4" height="1" fill="#939393"/><rect x="13" y="614.88" width="2.4" height="1" fill="#939393"/><rect x="13" y="619.60" width="2.4" height="1" fill="#939393"/><rect x="13" y="624.33" width="2.4" height="1" fill="#939393"/><rect x="11" y="629.05" width="4.4" height="1" fill="#999"/><rect x="13" y="633.78" width="2.4" height="1" fill="#939393"/><rect x="13" y="638.50" width="2.4" height="1" fill="#939393"/><rect x="13" y="643.23" width="2.4" height="1" fill="#939393"/><rect x="13" y="647.95" width="2.4" height="1" fill="#939393"/><rect x="0" y="652.68" width="16" height="1" fill="#9c9c9c"/><rect x="13" y="657.41" width="2.4" height="1" fill="#939393"/><rect x="13" y="662.13" width="2.4" height="1" fill="#939393"/><rect x="13" y="666.86" width="2.4" height="1" fill="#939393"/><rect x="13" y="671.58" width="2.4" height="1" fill="#939393"/><rect x="11" y="676.31" width="4.4" height="1" fill="#999"/><rect x="13" y="681.03" width="2.4" height="1" fill="#939393"/><rect x="13" y="685.76" width="2.4" height="1" fill="#939393"/><rect x="13" y="690.48" width="2.4" height="1" fill="#939393"/><rect x="13" y="695.21" width="2.4" height="1" fill="#939393"/><rect x="0" y="699.94" width="16" height="1" fill="#9c9c9c"/><rect x="13" y="704.66" width="2.4" height="1" fill="#939393"/><rect x="13" y="709.39" width="2.4" height="1" fill="#939393"/><rect x="13" y="714.11" width="2.4" height="1" fill="#939393"/><rect x="13" y="718.84" width="2.4" height="1" fill="#939393"/><rect x="11" y="723.56" width="4.4" height="1" fill="#999"/><rect x="13" y="728.29" width="2.4" height="1" fill="#939393"/><rect x="13" y="733.01" width="2.4" height="1" fill="#939393"/><rect x="13" y="737.74" width="2.4" height="1" fill="#939393"/><rect x="13" y="742.46" width="2.4" height="1" fill="#939393"/><rect x="0" y="747.19" width="16" height="1" fill="#9c9c9c"/><rect x="13" y="751.92" width="2.4" height="1" fill="#939393"/><rect x="13" y="756.64" width="2.4" height="1" fill="#939393"/><rect x="13" y="761.37" width="2.4" height="1" fill="#939393"/><rect x="13" y="766.09" width="2.4" height="1" fill="#939393"/><rect x="11" y="770.82" width="4.4" height="1" fill="#999"/><rect x="13" y="775.54" width="2.4" height="1" fill="#939393"/><rect x="13" y="780.27" width="2.4" height="1" fill="#939393"/><rect x="13" y="784.99" width="2.4" height="1" fill="#939393"/><rect x="13" y="789.72" width="2.4" height="1" fill="#939393"/><rect x="0" y="794.45" width="16" height="1" fill="#9c9c9c"/><rect x="13" y="799.17" width="2.4" height="1" fill="#939393"/><rect x="13" y="803.90" width="2.4" height="1" fill="#939393"/><rect x="13" y="808.62" width="2.4" height="1" fill="#939393"/><rect x="13" y="813.35" width="2.4" height="1" fill="#939393"/><rect x="11" y="818.07" width="4.4" height="1" fill="#999"/><rect x="13" y="822.80" width="2.4" height="1" fill="#939393"/><rect x="13" y="827.52" width="2.4" height="1" fill="#939393"/><rect x="13" y="832.25" width="2.4" height="1" fill="#939393"/><rect x="13" y="836.97" width="2.4" height="1" fill="#939393"/><rect x="0" y="841.70" width="16" height="1" fill="#9c9c9c"/><rect x="13" y="846.43" width="2.4" height="1" fill="#939393"/><rect x="13" y="851.15" width="2.4" height="1" fill="#939393"/><rect x="13" y="855.88" width="2.4" height="1" fill="#939393"/><rect x="13" y="860.60" width="2.4" height="1" fill="#939393"/><rect x="11" y="865.33" width="4.4" height="1" fill="#999"/><rect x="13" y="870.05" width="2.4" height="1" fill="#939393"/><rect x="13" y="874.78" width="2.4" height="1" fill="#939393"/><rect x="13" y="879.50" width="2.4" height="1" fill="#939393"/><rect x="13" y="884.23" width="2.4" height="1" fill="#939393"/><rect x="0" y="888.96" width="16" height="1" fill="#9c9c9c"/><rect x="13" y="893.68" width="2.4" height="1" fill="#939393"/><rect x="13" y="898.41" width="2.4" height="1" fill="#939393"/><rect x="13" y="903.13" width="2.4" height="1" fill="#939393"/><rect x="13" y="907.86" width="2.4" height="1" fill="#939393"/><path d="M0 169.5h15" stroke="#000" stroke-width="1"/><path d="M1 169.5h14" stroke="#f4f4f4" stroke-width="1" stroke-dasharray="1,1"/></svg>
<div style="left:31px;top:114px;width:15px;height:910px;overflow:hidden;">
<div class="t" style="left:2.2px;top:0px;font-size:9.3px;color:#d6d6d6;">0</div>
<div class="t" style="left:2.2px;top:40px;font-size:9.3px;color:#d6d6d6;">3</div>
<div class="t" style="left:2.2px;top:48px;font-size:9.3px;color:#d6d6d6;">0</div>
<div class="t" style="left:2.2px;top:87px;font-size:9.3px;color:#d6d6d6;">4</div>
<div class="t" style="left:2.2px;top:95px;font-size:9.3px;color:#d6d6d6;">0</div>
<div class="t" style="left:2.2px;top:134px;font-size:9.3px;color:#d6d6d6;">5</div>
<div class="t" style="left:2.2px;top:142px;font-size:9.3px;color:#d6d6d6;">0</div>
<div class="t" style="left:2.2px;top:181px;font-size:9.3px;color:#d6d6d6;">6</div>
<div class="t" style="left:2.2px;top:189px;font-size:9.3px;color:#d6d6d6;">0</div>
<div class="t" style="left:2.2px;top:229px;font-size:9.3px;color:#d6d6d6;">7</div>
<div class="t" style="left:2.2px;top:237px;font-size:9.3px;color:#d6d6d6;">0</div>
<div class="t" style="left:2.2px;top:276px;font-size:9.3px;color:#d6d6d6;">8</div>
<div class="t" style="left:2.2px;top:284px;font-size:9.3px;color:#d6d6d6;">0</div>
<div class="t" style="left:2.2px;top:323px;font-size:9.3px;color:#d6d6d6;">9</div>
<div class="t" style="left:2.2px;top:331px;font-size:9.3px;color:#d6d6d6;">0</div>
<div class="t" style="left:2.2px;top:370px;font-size:9.3px;color:#d6d6d6;">1</div>
<div class="t" style="left:2.2px;top:378px;font-size:9.3px;color:#d6d6d6;">0</div>
<div class="t" style="left:2.2px;top:386px;font-size:9.3px;color:#d6d6d6;">0</div>
<div class="t" style="left:2.2px;top:418px;font-size:9.3px;color:#d6d6d6;">1</div>
<div class="t" style="left:2.2px;top:426px;font-size:9.3px;color:#d6d6d6;">1</div>
<div class="t" style="left:2.2px;top:434px;font-size:9.3px;color:#d6d6d6;">0</div>
<div class="t" style="left:2.2px;top:465px;font-size:9.3px;color:#d6d6d6;">1</div>
<div class="t" style="left:2.2px;top:473px;font-size:9.3px;color:#d6d6d6;">2</div>
<div class="t" style="left:2.2px;top:481px;font-size:9.3px;color:#d6d6d6;">0</div>
<div class="t" style="left:2.2px;top:512px;font-size:9.3px;color:#d6d6d6;">1</div>
<div class="t" style="left:2.2px;top:520px;font-size:9.3px;color:#d6d6d6;">3</div>
<div class="t" style="left:2.2px;top:528px;font-size:9.3px;color:#d6d6d6;">0</div>
<div class="t" style="left:2.2px;top:559px;font-size:9.3px;color:#d6d6d6;">1</div>
<div class="t" style="left:2.2px;top:567px;font-size:9.3px;color:#d6d6d6;">4</div>
<div class="t" style="left:2.2px;top:575px;font-size:9.3px;color:#d6d6d6;">0</div>
<div class="t" style="left:2.2px;top:607px;font-size:9.3px;color:#d6d6d6;">1</div>
<div class="t" style="left:2.2px;top:615px;font-size:9.3px;color:#d6d6d6;">5</div>
<div class="t" style="left:2.2px;top:623px;font-size:9.3px;color:#d6d6d6;">0</div>
<div class="t" style="left:2.2px;top:654px;font-size:9.3px;color:#d6d6d6;">1</div>
<div class="t" style="left:2.2px;top:662px;font-size:9.3px;color:#d6d6d6;">6</div>
<div class="t" style="left:2.2px;top:670px;font-size:9.3px;color:#d6d6d6;">0</div>
<div class="t" style="left:2.2px;top:701px;font-size:9.3px;color:#d6d6d6;">1</div>
<div class="t" style="left:2.2px;top:709px;font-size:9.3px;color:#d6d6d6;">7</div>
<div class="t" style="left:2.2px;top:717px;font-size:9.3px;color:#d6d6d6;">0</div>
<div class="t" style="left:2.2px;top:748px;font-size:9.3px;color:#d6d6d6;">1</div>
<div class="t" style="left:2.2px;top:756px;font-size:9.3px;color:#d6d6d6;">8</div>
<div class="t" style="left:2.2px;top:764px;font-size:9.3px;color:#d6d6d6;">0</div>
<div class="t" style="left:2.2px;top:796px;font-size:9.3px;color:#d6d6d6;">1</div>
<div class="t" style="left:2.2px;top:804px;font-size:9.3px;color:#d6d6d6;">9</div>
<div class="t" style="left:2.2px;top:812px;font-size:9.3px;color:#d6d6d6;">0</div>
<div class="t" style="left:2.2px;top:843px;font-size:9.3px;color:#d6d6d6;">2</div>
<div class="t" style="left:2.2px;top:851px;font-size:9.3px;color:#d6d6d6;">0</div>
<div class="t" style="left:2.2px;top:859px;font-size:9.3px;color:#d6d6d6;">0</div>
<div class="t" style="left:2.2px;top:890px;font-size:9.3px;color:#d6d6d6;">2</div>
<div class="t" style="left:2.2px;top:898px;font-size:9.3px;color:#d6d6d6;">1</div>
<div class="t" style="left:2.2px;top:906px;font-size:9.3px;color:#d6d6d6;">0</div>
<div class="t" style="left:2.2px;top:937px;font-size:9.3px;color:#d6d6d6;">2</div>
<div class="t" style="left:2.2px;top:945px;font-size:9.3px;color:#d6d6d6;">2</div>
<div class="t" style="left:2.2px;top:953px;font-size:9.3px;color:#d6d6d6;">0</div>
</div>
<div style="left:1740px;top:97.5px;width:15.5px;height:926.5px;background:#353535;"></div>
<div style="left:1740px;top:97.5px;width:1px;height:926.5px;background:#2a2a2a;"></div>
<svg style="left:1743.8px;top:102.6px;" width="8" height="5.4" viewBox="0 0 8 5.4"><polygon points="0,5.4 8,5.4 4.0,0" fill="#dcdcdc"/></svg>
<svg style="left:1743.5px;top:1013.6px;" width="8.4" height="5.6" viewBox="0 0 8.4 5.6"><polygon points="0,0 8.4,0 4.2,5.6" fill="#dcdcdc"/></svg>
<div style="left:1741px;top:251px;width:14.5px;height:470px;background:#8c8c8c;"></div>
<div style="left:1755.5px;top:78px;width:2.5px;height:963px;background:#242424;"></div>
<div style="left:31px;top:1024px;width:1724.5px;height:15px;background:#484848;"></div>
<div style="left:500px;top:1024px;width:1217.5px;height:15px;background:#333;"></div>
<div style="left:954px;top:1024.5px;width:502.5px;height:14.5px;background:#8c8c8c;"></div>
<svg style="left:504.3px;top:1027.5px;" width="5" height="8" viewBox="0 0 5 8"><polygon points="5,0 0,4.0 5,8" fill="#dcdcdc"/></svg>
<svg style="left:1706.8px;top:1027.3px;" width="5.8" height="8.6" viewBox="0 0 5.8 8.6"><polygon points="0,0 5.8,4.3 0,8.6" fill="#dcdcdc"/></svg>
<div style="left:1717.5px;top:1024px;width:38px;height:15px;background:#4b4b4b;"></div>
<svg style="left:1722.5px;top:1026px;" width="16" height="13" viewBox="0 0 16 13"><rect x="0.8" y="0.8" width="14" height="10.6" fill="#3a3a3a" stroke="#dcdcdc" stroke-width="1.2"/><path d="M7.8 0.8v10.6" stroke="#dcdcdc" stroke-width="1.2"/></svg>
<svg style="left:1744px;top:1027.5px;" width="12" height="12" viewBox="0 0 12 12"><rect x="8.8" y="0.0" width="1" height="1" fill="#c8c8c8"/><rect x="6.6000000000000005" y="2.2" width="1" height="1" fill="#c8c8c8"/><rect x="8.8" y="2.2" width="1" height="1" fill="#c8c8c8"/><rect x="4.4" y="4.4" width="1" height="1" fill="#c8c8c8"/><rect x="6.6000000000000005" y="4.4" width="1" height="1" fill="#c8c8c8"/><rect x="8.8" y="4.4" width="1" height="1" fill="#c8c8c8"/><rect x="2.2" y="6.6000000000000005" width="1" height="1" fill="#c8c8c8"/><rect x="4.4" y="6.6000000000000005" width="1" height="1" fill="#c8c8c8"/><rect x="6.6000000000000005" y="6.6000000000000005" width="1" height="1" fill="#c8c8c8"/><rect x="8.8" y="6.6000000000000005" width="1" height="1" fill="#c8c8c8"/><rect x="0.0" y="8.8" width="1" height="1" fill="#c8c8c8"/><rect x="2.2" y="8.8" width="1" height="1" fill="#c8c8c8"/><rect x="4.4" y="8.8" width="1" height="1" fill="#c8c8c8"/><rect x="6.6000000000000005" y="8.8" width="1" height="1" fill="#c8c8c8"/><rect x="8.8" y="8.8" width="1" height="1" fill="#c8c8c8"/></svg>
<svg style="left:48px;top:1027px;" width="19" height="10.5" viewBox="0 0 19 10.5"><rect x="0" y="0" width="19" height="10" rx="1.5" fill="#8c8c8c"/><circle cx="5.6" cy="5" r="2.2" fill="none" stroke="#3a3a3a" stroke-width="2" stroke-dasharray="1.2,0.9"/><circle cx="5.6" cy="5" r="1.6" fill="#3a3a3a"/><circle cx="5.6" cy="5" r="0.8" fill="#8c8c8c"/><rect x="12.2" y="1.6" width="2" height="4.2" fill="#3a3a3a"/><rect x="12.2" y="6.8" width="2" height="1.8" fill="#3a3a3a"/></svg>
<svg style="left:74.5px;top:1025.5px;" width="14" height="12" viewBox="0 0 14 12"><path d="M5 2.6H1v8.4h10V8" fill="none" stroke="#d8d8d8" stroke-width="1.3"/><path d="M3.6 8.6C4 5.4 6 3.8 9 3.8V1.4L13.2 5 9 8.4V6.2C6.6 6.2 5 6.8 3.6 8.6Z" fill="#d8d8d8"/></svg>
<svg style="left:98px;top:1028.3px;" width="8" height="10" viewBox="0 0 8 10"><rect x="0.3" y="0" width="1.2" height="9.5" fill="#8c8c8c"/><polygon points="7.4,0 2,4.75 7.4,9.5" fill="#8c8c8c"/></svg>
<svg style="left:112.8px;top:1028.3px;" width="5.6" height="9.5" viewBox="0 0 5.6 9.5"><polygon points="5.6,0 0,4.75 5.6,9.5" fill="#8c8c8c"/></svg>
<div class="t" style="left:128.4px;top:1028px;font-size:9.6px;color:#e0e0e0;">1</div>
<svg style="left:210px;top:1030px;" width="7.2" height="5" viewBox="0 0 7.2 5"><polygon points="0,0 7.2,0 3.6,5" fill="#e6e6e6"/></svg>
<svg style="left:229px;top:1028.3px;" width="5.6" height="9.5" viewBox="0 0 5.6 9.5"><polygon points="0,0 5.6,4.75 0,9.5" fill="#8c8c8c"/></svg>
<svg style="left:242px;top:1028.3px;" width="8" height="10" viewBox="0 0 8 10"><polygon points="0,0 5.4,4.75 0,9.5" fill="#8c8c8c"/><rect x="6" y="0" width="1.2" height="9.5" fill="#8c8c8c"/></svg>
<svg style="left:257px;top:1026px;" width="19" height="13.5" viewBox="0 0 19 13.5"><circle cx="6.6" cy="6.4" r="6.1" fill="#d6d6d6"/><path d="M3.6 2.8h4l2.2 2.2v5.6H3.6Z" fill="#d6d6d6" stroke="#3a3a3a" stroke-width="1"/><path d="M7.4 2.8v2.4h2.4" fill="none" stroke="#3a3a3a" stroke-width="0.9"/><polygon points="13.6,10.6 17,10.6 15.3,12.6" fill="#d6d6d6"/></svg>
<div class="t" style="left:283.4px;top:1027.8px;font-size:9.4px;color:#dcdcdc;letter-spacing:-0.134px;">[Grundprofil] (Arbeits...</div>
<svg style="left:388px;top:1030.2px;" width="7" height="4.8" viewBox="0 0 7 4.8"><polygon points="0,0 7,0 3.5,4.8" fill="#e0e0e0"/></svg>
<svg style="left:402px;top:1027.5px;" width="12" height="12" viewBox="0 0 12 12"><circle cx="5.9" cy="5.8" r="5.6" fill="#5db42c"/></svg>
<div class="t" style="left:417.3px;top:1027.8px;font-size:9.4px;color:#dcdcdc;letter-spacing:-0.332px;">Ohne Fehler</div>
<svg style="left:488.5px;top:1031px;" width="5.4" height="3.4" viewBox="0 0 5.4 3.4"><polygon points="0,0 5.4,0 2.7,3.4" fill="#dcdcdc"/></svg>
<div class="t" style="left:39.5px;top:990.6px;font-size:9.4px;color:#f4f4f4;letter-spacing:1.5px;">http</div>
<svg style="left:0;top:0;" width="0" height="0"><defs><linearGradient id="gg" x1="0" y1="0" x2="0" y2="1"><stop offset="0" stop-color="#dedede"/><stop offset="1" stop-color="#9e9e9e"/></linearGradient><linearGradient id="gh" x1="0" y1="0" x2="1" y2="0"><stop offset="0" stop-color="#3a3a3a"/><stop offset="1" stop-color="#dcdcdc"/></linearGradient></defs></svg>
<svg style="left:6.4px;top:107.2px;" width="18" height="18" viewBox="0 0 18 18"><path d="M1.6 1L1.6 12.8 4.8 10 7.2 15.2 9.6 14.2 7.2 9.2 11.4 9Z" fill="#3d3d3d" stroke="#d4d4d4" stroke-width="1.3" stroke-linejoin="round"/></svg>
<svg style="left:6.4px;top:128.4px;" width="18" height="18" viewBox="0 0 18 18"><path d="M2 0.8L2 13 5.4 10 7.8 15.4 10 14.4 7.6 9.2 11.8 9Z" fill="url(#gg)"/></svg>
<svg style="left:5px;top:150px;" width="18" height="18" viewBox="0 0 18 18"><path d="M1.5 0.8H8.5L12.5 4.8V16H1.5Z" fill="url(#gg)"/><path d="M8.5 0.8V4.8H12.5" fill="#6a6a6a"/><path d="M10.4 8.2L10.4 16.6 12.6 14.6 14 17.6 15.4 17 14 14 16.6 13.9Z" fill="#e6e6e6" stroke="#444" stroke-width="0.6"/></svg>
<svg style="left:2px;top:171.5px;" width="22" height="15" viewBox="0 0 22 15"><path d="M1.2 0.5v14M20.6 0.5v14" stroke="#d2d2d2" stroke-width="1.6"/><path d="M4.5 7.5h13" stroke="#d2d2d2" stroke-width="1.5"/><path d="M7.8 4.2L4.2 7.5 7.8 10.8M14.2 4.2L17.8 7.5 14.2 10.8" fill="none" stroke="#d2d2d2" stroke-width="1.5"/></svg>
<svg style="left:5px;top:191px;" width="18" height="18" viewBox="0 0 18 18"><path d="M1.2 7.5V16.4H15.6V7.5" fill="none" stroke="#d2d2d2" stroke-width="1.5"/><path d="M4 9.6h2.2v2H4zM7.4 9.6h2.2v2H7.4zM10.8 9.6h2.2v2h-2.2zM4 12.8h2.2v2H4zM7.4 12.8h2.2v2H7.4z" fill="#d2d2d2"/><path d="M3.2 1L8.4 6.2M8.8 2.6V6.6H4.8" fill="none" stroke="#d2d2d2" stroke-width="1.6"/></svg>
<svg style="left:19.5px;top:204.5px;" width="4" height="4" viewBox="0 0 4 4"><polygon points="3.6,0 3.6,3.6 0,3.6" fill="#d6d6d6"/></svg>
<div style="left:2px;top:214px;width:24px;height:1px;background:#3a3a3a;"></div>
<div style="left:2px;top:215px;width:24px;height:1px;background:#525252;"></div>
<div style="left:2px;top:218.5px;width:23.5px;height:19px;background:#2f2f2f;border-radius:1.5px;"></div>
<div class="t" style="left:7px;top:218.8px;font-family:'Liberation Serif',serif;font-size:18.5px;color:#dadada;">T</div>
<svg style="left:19.8px;top:232.8px;" width="4" height="4" viewBox="0 0 4 4"><polygon points="3.6,0 3.6,3.6 0,3.6" fill="#d6d6d6"/></svg>
<svg style="left:5px;top:241px;" width="16" height="16" viewBox="0 0 16 16"><path d="M1 14.6L14.6 1" stroke="#d6d6d6" stroke-width="1.4"/></svg>
<svg style="left:4px;top:259.5px;" width="19" height="20" viewBox="0 0 19 20"><path d="M11.4 1.2L16.8 6.6 14 8.2 9.8 4Z" fill="#d0d0d0"/><path d="M9.2 4.8L13.4 9 11.6 14.4 2 18.4 1.6 18 5.6 8.4Z" fill="url(#gg)"/><path d="M2 18L7.6 12.4" stroke="#474747" stroke-width="1"/><circle cx="8.2" cy="11.8" r="1.2" fill="#474747"/></svg>
<svg style="left:19.5px;top:275.5px;" width="4" height="4" viewBox="0 0 4 4"><polygon points="3.6,0 3.6,3.6 0,3.6" fill="#d6d6d6"/></svg>
<svg style="left:4px;top:283px;" width="19" height="18" viewBox="0 0 19 18"><path d="M12 1.4C13.4 0.4 15.4 1.6 16 3.2L6.4 13.6 2.4 16 1.6 15.4 3.4 11Z" fill="url(#gg)"/><path d="M6 8.4L8.6 11M8.4 5.8L11 8.4M10.8 3.4L13.4 6" stroke="#555" stroke-width="1.2"/><path d="M1.6 15.6L3 12 5.4 14.2Z" fill="#555"/></svg>
<svg style="left:19.5px;top:297px;" width="4" height="4" viewBox="0 0 4 4"><polygon points="3.6,0 3.6,3.6 0,3.6" fill="#d6d6d6"/></svg>
<svg style="left:5.5px;top:306px;" width="15" height="13" viewBox="0 0 15 13"><rect x="0.8" y="0.8" width="13" height="11" fill="#555" stroke="#d4d4d4" stroke-width="1.3"/><path d="M0.8 0.8L13.8 11.8M13.8 0.8L0.8 11.8" stroke="#d4d4d4" stroke-width="1"/></svg>
<svg style="left:19.5px;top:316.5px;" width="4" height="4" viewBox="0 0 4 4"><polygon points="3.6,0 3.6,3.6 0,3.6" fill="#d6d6d6"/></svg>
<svg style="left:5.5px;top:326px;" width="15" height="14" viewBox="0 0 15 14"><rect x="0.8" y="0.8" width="13" height="11.4" fill="url(#gg)" stroke="#e0e0e0" stroke-width="1.2"/></svg>
<svg style="left:19.5px;top:337px;" width="4" height="4" viewBox="0 0 4 4"><polygon points="3.6,0 3.6,3.6 0,3.6" fill="#d6d6d6"/></svg>
<div style="left:2px;top:347.5px;width:24px;height:1px;background:#3a3a3a;"></div>
<div style="left:2px;top:348.5px;width:24px;height:1px;background:#525252;"></div>
<svg style="left:4px;top:353px;" width="19" height="15" viewBox="0 0 19 15"><path d="M6.2 8.4L17.4 1.2M6.2 6.2L17.4 13.4" stroke="#d4d4d4" stroke-width="1.5"/><circle cx="3.6" cy="3.6" r="2.4" fill="none" stroke="#d4d4d4" stroke-width="1.5"/><circle cx="3.6" cy="11" r="2.4" fill="none" stroke="#d4d4d4" stroke-width="1.5"/></svg>
<svg style="left:4px;top:374px;" width="19" height="16" viewBox="0 0 19 16"><path d="M1.4 1L1.4 12 4.4 9.4 6.6 14 8.6 13 6.6 8.6 10.4 8.4Z" fill="url(#gg)"/><rect x="7.4" y="3.4" width="9.6" height="9.6" fill="none" stroke="#d0d0d0" stroke-width="1.3" stroke-dasharray="2,1.4"/><rect x="15.4" y="11.4" width="3" height="3" fill="#d8d8d8"/></svg>
<svg style="left:19.5px;top:386.5px;" width="4" height="4" viewBox="0 0 4 4"><polygon points="3.6,0 3.6,3.6 0,3.6" fill="#d6d6d6"/></svg>
<svg style="left:5px;top:396.5px;" width="17" height="13" viewBox="0 0 17 13"><rect x="0.7" y="0.7" width="15" height="11" fill="url(#gh)" stroke="#d6d6d6" stroke-width="1.2"/></svg>
<svg style="left:5px;top:417.3px;" width="17" height="13" viewBox="0 0 17 13"><rect x="0.7" y="0.7" width="15" height="11" fill="#8a8a8a"/><rect x="0.7" y="0.7" width="2.5" height="2.75" fill="#dedede" opacity="1.00"/><rect x="3.2" y="0.7" width="2.5" height="2.75" fill="#3f3f3f" opacity="0.90"/><rect x="5.7" y="0.7" width="2.5" height="2.75" fill="#dedede" opacity="1.00"/><rect x="8.2" y="0.7" width="2.5" height="2.75" fill="#3f3f3f" opacity="0.90"/><rect x="10.7" y="0.7" width="2.5" height="2.75" fill="#dedede" opacity="1.00"/><rect x="13.2" y="0.7" width="2.5" height="2.75" fill="#3f3f3f" opacity="0.90"/><rect x="0.7" y="3.45" width="2.5" height="2.75" fill="#3f3f3f" opacity="0.70"/><rect x="3.2" y="3.45" width="2.5" height="2.75" fill="#dedede" opacity="0.75"/><rect x="5.7" y="3.45" width="2.5" height="2.75" fill="#3f3f3f" opacity="0.70"/><rect x="8.2" y="3.45" width="2.5" height="2.75" fill="#dedede" opacity="0.75"/><rect x="10.7" y="3.45" width="2.5" height="2.75" fill="#3f3f3f" opacity="0.70"/><rect x="13.2" y="3.45" width="2.5" height="2.75" fill="#dedede" opacity="0.75"/><rect x="0.7" y="6.2" width="2.5" height="2.75" fill="#dedede" opacity="0.50"/><rect x="3.2" y="6.2" width="2.5" height="2.75" fill="#3f3f3f" opacity="0.50"/><rect x="5.7" y="6.2" width="2.5" height="2.75" fill="#dedede" opacity="0.50"/><rect x="8.2" y="6.2" width="2.5" height="2.75" fill="#3f3f3f" opacity="0.50"/><rect x="10.7" y="6.2" width="2.5" height="2.75" fill="#dedede" opacity="0.50"/><rect x="13.2" y="6.2" width="2.5" height="2.75" fill="#3f3f3f" opacity="0.50"/><rect x="0.7" y="8.95" width="2.5" height="2.75" fill="#3f3f3f" opacity="0.30"/><rect x="3.2" y="8.95" width="2.5" height="2.75" fill="#dedede" opacity="0.25"/><rect x="5.7" y="8.95" width="2.5" height="2.75" fill="#3f3f3f" opacity="0.30"/><rect x="8.2" y="8.95" width="2.5" height="2.75" fill="#dedede" opacity="0.25"/><rect x="10.7" y="8.95" width="2.5" height="2.75" fill="#3f3f3f" opacity="0.30"/><rect x="13.2" y="8.95" width="2.5" height="2.75" fill="#dedede" opacity="0.25"/></svg>
<div style="left:2px;top:437.5px;width:24px;height:1px;background:#3a3a3a;"></div>
<div style="left:2px;top:438.5px;width:24px;height:1px;background:#525252;"></div>
<svg style="left:5.5px;top:445px;" width="17" height="15" viewBox="0 0 17 15"><path d="M0.8 0.8H15V9.8L11 13.8H0.8Z" fill="url(#gg)"/><path d="M3 4h9.6M3 6.6h9.6M3 9.2h6" stroke="#474747" stroke-width="1.2"/><path d="M11 13.8V9.8H15" fill="#6e6e6e"/></svg>
<svg style="left:19.8px;top:456.5px;" width="4" height="4" viewBox="0 0 4 4"><polygon points="3.6,0 3.6,3.6 0,3.6" fill="#d6d6d6"/></svg>
<svg style="left:4.5px;top:464.5px;" width="18" height="17" viewBox="0 0 18 17"><path d="M12.2 1.2C13.6 -0.2 16.4 2.4 15 4L12.6 6.4 13.6 7.4 12.2 8.8 7.8 4.4 9.2 3 10.2 4Z" fill="#dadada"/><path d="M8.6 6L11 8.4 4.4 15 2 15.6 1.4 15 2 12.6Z" fill="none" stroke="#cfcfcf" stroke-width="1.2"/></svg>
<svg style="left:19.5px;top:477.5px;" width="4" height="4" viewBox="0 0 4 4"><polygon points="3.6,0 3.6,3.6 0,3.6" fill="#d6d6d6"/></svg>
<svg style="left:4.5px;top:486px;" width="18" height="17.5" viewBox="0 0 18 17.5"><path d="M4.6 9.6V3.4C4.6 2 6.6 2 6.6 3.4V2C6.6 0.4 8.8 0.4 8.8 2V2.6C8.8 1.2 11 1.2 11 2.6V4C11 2.8 13 2.8 13 4.2V11.4C13 14.6 11.4 16.8 8.4 16.8 5.8 16.8 4.6 15.4 3.4 13.4L0.8 9C0.2 7.8 1.8 6.8 2.8 8Z" fill="url(#gg)"/><path d="M6.7 3.4V8.4M8.9 2.6V8.4M11 4V8.6" stroke="#6a6a6a" stroke-width="0.7"/></svg>
<svg style="left:5px;top:506px;" width="17" height="18" viewBox="0 0 17 18"><circle cx="6.6" cy="6.6" r="5" fill="#7a7a7a" stroke="#d4d4d4" stroke-width="1.6"/><path d="M10.4 10.6L15.4 15.8" stroke="#d0d0d0" stroke-width="2.6" stroke-linecap="round"/></svg>
<div style="left:2px;top:527.5px;width:24px;height:1px;background:#3a3a3a;"></div>
<div style="left:2px;top:528.5px;width:24px;height:1px;background:#525252;"></div>
<svg style="left:2px;top:532.5px;" width="22" height="20" viewBox="0 0 22 20"><rect x="9.4" y="8" width="10" height="10.6" fill="none" stroke="#1a1a1a" stroke-width="2.6"/><rect x="8.4" y="7" width="12" height="12.6" fill="none" stroke="#bdbdbd" stroke-width="0.8"/><rect x="11.2" y="9.8" width="6.4" height="7" fill="#474747" stroke="#9a9a9a" stroke-width="0.6"/><rect x="0.9" y="1.2" width="11.6" height="11.6" fill="#f2f2f2" stroke="#8e8e8e" stroke-width="0.9"/><path d="M1.6 12.2L11.8 1.8" stroke="#e3141c" stroke-width="1.6"/><path d="M14.6 1.6C17 1.6 18.6 3 18.6 5.4" fill="none" stroke="#d8d8d8" stroke-width="1"/><polygon points="14.8,0 14.8,3.2 13,1.6" fill="#d8d8d8"/><polygon points="17,5 20.2,5 18.6,6.8" fill="#d8d8d8"/></svg>
<svg style="left:2.5px;top:552px;" width="12" height="12" viewBox="0 0 12 12"><rect x="4.2" y="4.4" width="6.2" height="6.2" fill="none" stroke="#111" stroke-width="1.8"/><rect x="3.2" y="3.4" width="8.2" height="8.2" fill="none" stroke="#c8c8c8" stroke-width="0.7"/><rect x="0.7" y="0.7" width="6.6" height="6.6" fill="#f0f0f0" stroke="#999" stroke-width="0.7"/><path d="M1.2 6.8L6.8 1.2" stroke="#e3141c" stroke-width="1.2"/></svg>
<svg style="left:2px;top:568.5px;" width="11" height="10" viewBox="0 0 11 10"><rect x="0.8" y="0.8" width="8.6" height="8.2" fill="#3d3d3d" stroke="#d0d0d0" stroke-width="1.2"/></svg>
<div class="t" style="left:15.4px;top:567px;font-family:'Liberation Serif',serif;font-weight:bold;font-size:13px;color:#d6d6d6;">T</div>
<div style="left:2px;top:581px;width:24px;height:1px;background:#3a3a3a;"></div>
<div style="left:2px;top:582px;width:24px;height:1px;background:#525252;"></div>
<div style="left:4px;top:585.5px;width:20px;height:19.5px;background:#333;border-radius:1.5px;"></div>
<svg style="left:7px;top:588.3px;" width="13" height="13" viewBox="0 0 13 13"><rect x="0.6" y="0.6" width="11.4" height="11.6" fill="#f2f2f2" stroke="#8e8e8e" stroke-width="0.9"/><path d="M1.2 11.6L11.4 1.2" stroke="#e3141c" stroke-width="1.6"/></svg>
<svg style="left:19.6px;top:600.2px;" width="4" height="4" viewBox="0 0 4 4"><polygon points="3.6,0 3.6,3.6 0,3.6" fill="#d6d6d6"/></svg>
<div style="left:2px;top:608.5px;width:24px;height:1px;background:#3a3a3a;"></div>
<div style="left:2px;top:609.5px;width:24px;height:1px;background:#525252;"></div>
<div style="left:4px;top:613px;width:20px;height:19.5px;background:#333;border-radius:1.5px;"></div>
<svg style="left:7.5px;top:618.5px;" width="13" height="11" viewBox="0 0 13 11"><rect x="0.7" y="0.7" width="11" height="9.4" fill="#3a3a3a" stroke="#d6d6d6" stroke-width="1.3"/><rect x="0.7" y="0.7" width="11" height="2.4" fill="#d6d6d6"/><rect x="5" y="5" width="5" height="3.4" fill="#d6d6d6"/></svg>
<svg style="left:19.6px;top:628px;" width="4" height="4" viewBox="0 0 4 4"><polygon points="3.6,0 3.6,3.6 0,3.6" fill="#d6d6d6"/></svg>
<div style="left:1758px;top:78px;width:156px;height:12px;background:linear-gradient(#343434,#282828);"></div>
<div style="left:1758px;top:78px;width:156px;height:1px;background:#3e3e3e;"></div>
<div style="left:1758px;top:90px;width:156px;height:1px;background:#5c5c5c;"></div>
<div style="left:1758px;top:91px;width:156px;height:948px;background:#474747;"></div>
<div style="left:1758px;top:91px;width:1px;height:948px;background:#555;"></div>
<svg style="left:1904.5px;top:81.5px;" width="9" height="6" viewBox="0 0 9 6"><polygon points="3.4,0 3.4,5.6 0,2.8" fill="#d0d0d0"/><polygon points="7.6,0 7.6,5.6 4.2,2.8" fill="#d0d0d0"/></svg>
<div style="left:1827px;top:93px;width:1px;height:4px;background:#1c1c1c;"></div>
<div style="left:1829px;top:93px;width:1px;height:4px;background:#1c1c1c;"></div>
<div style="left:1831px;top:93px;width:1px;height:4px;background:#1c1c1c;"></div>
<div style="left:1833px;top:93px;width:1px;height:4px;background:#1c1c1c;"></div>
<div style="left:1835px;top:93px;width:1px;height:4px;background:#1c1c1c;"></div>
<div style="left:1837px;top:93px;width:1px;height:4px;background:#1c1c1c;"></div>
<div style="left:1839px;top:93px;width:1px;height:4px;background:#1c1c1c;"></div>
<div style="left:1841px;top:93px;width:1px;height:4px;background:#1c1c1c;"></div>
<div style="left:1843px;top:93px;width:1px;height:4px;background:#1c1c1c;"></div>
<div style="left:1845px;top:93px;width:1px;height:4px;background:#1c1c1c;"></div>
<div class="t" style="left:1795.2px;top:109px;font-size:9.7px;color:#dedede;font-weight:bold;letter-spacing:-0.118px;">Seiten</div>
<svg style="left:1768px;top:105.1px;" width="20" height="17" viewBox="0 0 20 17"><path d="M0.6 3.6L3.2 1H8.4V14.6H0.6Z" fill="url(#gg)"/><path d="M18.4 3.6L15.8 1H10.6V14.6H18.4Z" fill="url(#gg)"/><path d="M0.6 3.6H3.2V1M18.4 3.6H15.8V1" fill="none" stroke="#555" stroke-width="0.7"/><path d="M9.5 0v17" stroke="#e6e6e6" stroke-width="1"/></svg>
<div class="t" style="left:1795.2px;top:137px;font-size:9.7px;color:#dedede;font-weight:bold;letter-spacing:-0.389px;">Ebenen</div>
<svg style="left:1768px;top:133.2px;" width="20" height="17" viewBox="0 0 20 17"><polygon points="9.5,6.6 18.4,11.2 9.5,16 0.6,11.2" fill="#b8b8b8"/><polygon points="9.5,0.6 18.4,5.4 9.5,10.4 0.6,5.4" fill="url(#gg)" stroke="#474747" stroke-width="0.9"/></svg>
<div class="t" style="left:1795.2px;top:165px;font-size:9.7px;color:#dedede;font-weight:bold;letter-spacing:0.169px;">Verknüpfungen</div>
<svg style="left:1768px;top:161.1px;" width="20" height="17" viewBox="0 0 20 17"><path d="M7 4.2H4.6C0 4.2 0 11.6 4.6 11.6H7M12 4.2H14.4C19 4.2 19 11.6 14.4 11.6H12" fill="none" stroke="#cdcdcd" stroke-width="2"/><path d="M5.4 7.9H13.6" stroke="#cdcdcd" stroke-width="2"/></svg>
<div style="left:1758px;top:186px;width:156px;height:1px;background:#2c2c2c;"></div>
<div style="left:1758px;top:187px;width:156px;height:1px;background:#5a5a5a;"></div>
<div style="left:1827px;top:190.5px;width:1px;height:4px;background:#1c1c1c;"></div>
<div style="left:1829px;top:190.5px;width:1px;height:4px;background:#1c1c1c;"></div>
<div style="left:1831px;top:190.5px;width:1px;height:4px;background:#1c1c1c;"></div>
<div style="left:1833px;top:190.5px;width:1px;height:4px;background:#1c1c1c;"></div>
<div style="left:1835px;top:190.5px;width:1px;height:4px;background:#1c1c1c;"></div>
<div style="left:1837px;top:190.5px;width:1px;height:4px;background:#1c1c1c;"></div>
<div style="left:1839px;top:190.5px;width:1px;height:4px;background:#1c1c1c;"></div>
<div style="left:1841px;top:190.5px;width:1px;height:4px;background:#1c1c1c;"></div>
<div style="left:1843px;top:190.5px;width:1px;height:4px;background:#1c1c1c;"></div>
<div style="left:1845px;top:190.5px;width:1px;height:4px;background:#1c1c1c;"></div>
<div class="t" style="left:1795.2px;top:206px;font-size:9.7px;color:#dedede;font-weight:bold;letter-spacing:0.119px;">Kontur</div>
<svg style="left:1768px;top:202.4px;" width="20" height="17" viewBox="0 0 20 17"><rect x="0.6" y="1.6" width="17.6" height="1.2" fill="#cdcdcd"/><rect x="0.6" y="6" width="17.6" height="2.2" fill="#cdcdcd"/><rect x="0.6" y="11" width="17.6" height="3.6" fill="#cdcdcd"/></svg>
<div class="t" style="left:1795.2px;top:234px;font-size:9.7px;color:#dedede;font-weight:bold;letter-spacing:-0.283px;">Farbe</div>
<svg style="left:1768px;top:230.0px;" width="20" height="17" viewBox="0 0 20 17"><path d="M9.6 1C15 1 19.2 4 19.2 7.6 19.2 10.4 17 10.6 15.4 10.4 13.2 10.2 12.6 11.4 13 12.8 13.4 14.6 11.8 15.2 9.6 15.2 4.2 15.2 0.2 12 0.2 8.2 0.2 4.2 4.2 1 9.6 1Z" fill="url(#gg)"/><circle cx="4.4" cy="8.6" r="1.5" fill="#474747"/><circle cx="7.2" cy="11.6" r="1.5" fill="#474747"/><circle cx="7.4" cy="5" r="1.5" fill="#474747"/><circle cx="12" cy="4.2" r="1.5" fill="#474747"/><circle cx="16" cy="6.8" r="1.4" fill="#474747"/></svg>
<div style="left:1758px;top:255px;width:156px;height:1px;background:#2c2c2c;"></div>
<div style="left:1758px;top:256px;width:156px;height:1px;background:#5a5a5a;"></div>
<div style="left:1827px;top:259px;width:1px;height:4px;background:#1c1c1c;"></div>
<div style="left:1829px;top:259px;width:1px;height:4px;background:#1c1c1c;"></div>
<div style="left:1831px;top:259px;width:1px;height:4px;background:#1c1c1c;"></div>
<div style="left:1833px;top:259px;width:1px;height:4px;background:#1c1c1c;"></div>
<div style="left:1835px;top:259px;width:1px;height:4px;background:#1c1c1c;"></div>
<div style="left:1837px;top:259px;width:1px;height:4px;background:#1c1c1c;"></div>
<div style="left:1839px;top:259px;width:1px;height:4px;background:#1c1c1c;"></div>
<div style="left:1841px;top:259px;width:1px;height:4px;background:#1c1c1c;"></div>
<div style="left:1843px;top:259px;width:1px;height:4px;background:#1c1c1c;"></div>
<div style="left:1845px;top:259px;width:1px;height:4px;background:#1c1c1c;"></div>
<div class="t" style="left:1795.2px;top:275px;font-size:9.7px;color:#dedede;font-weight:bold;letter-spacing:-0.103px;">Farbfelder</div>
<svg style="left:1768px;top:271.4px;" width="20" height="17" viewBox="0 0 20 17"><rect x="0.6" y="1.6" width="15.8" height="10.8" fill="#8c8c8c" stroke="#d0d0d0" stroke-width="1.1"/><path d="M0.6 7h15.8M5.9 1.6v10.8M11.2 1.6v10.8" stroke="#d0d0d0" stroke-width="1.1"/><rect x="1.2" y="2.2" width="4.2" height="4.2" fill="#2a2a2a"/><rect x="6.5" y="2.2" width="4.2" height="4.2" fill="#5a5a5a"/></svg>
<div class="t" style="left:1795.2px;top:303px;font-size:9.7px;color:#dedede;font-weight:bold;letter-spacing:-0.298px;">CC Libraries</div>
<svg style="left:1768px;top:299.2px;" width="20" height="17" viewBox="0 0 20 17"><path d="M6.2 3.2C9.2 0.4 14 1.6 15 5.4 18.6 5.6 20.2 9.4 18.4 12 17.4 13.6 16 14.2 14.4 14.2H5.8C2.4 14.2 0 11.6 0.8 8.2 1.2 6.6 2.4 5.4 4.2 5 4.6 4.2 5.4 3.6 6.2 3.2Z" fill="none" stroke="#d0d0d0" stroke-width="1.5"/><path d="M4.4 11.6C2.6 10 4 6.6 6.8 7.6L12.6 11.4C14.8 12.6 17 9.6 14.8 7.8" fill="none" stroke="#d0d0d0" stroke-width="1.4"/><path d="M7.6 5.6C9.4 3.6 12.6 4.6 12.4 7.4" fill="none" stroke="#d0d0d0" stroke-width="1.4"/></svg>
<div style="left:1758px;top:324.5px;width:156px;height:1px;background:#2c2c2c;"></div>
<div style="left:1758px;top:325.5px;width:156px;height:1px;background:#5a5a5a;"></div>
<div style="left:1827px;top:328.4px;width:1px;height:4px;background:#1c1c1c;"></div>
<div style="left:1829px;top:328.4px;width:1px;height:4px;background:#1c1c1c;"></div>
<div style="left:1831px;top:328.4px;width:1px;height:4px;background:#1c1c1c;"></div>
<div style="left:1833px;top:328.4px;width:1px;height:4px;background:#1c1c1c;"></div>
<div style="left:1835px;top:328.4px;width:1px;height:4px;background:#1c1c1c;"></div>
<div style="left:1837px;top:328.4px;width:1px;height:4px;background:#1c1c1c;"></div>
<div style="left:1839px;top:328.4px;width:1px;height:4px;background:#1c1c1c;"></div>
<div style="left:1841px;top:328.4px;width:1px;height:4px;background:#1c1c1c;"></div>
<div style="left:1843px;top:328.4px;width:1px;height:4px;background:#1c1c1c;"></div>
<div style="left:1845px;top:328.4px;width:1px;height:4px;background:#1c1c1c;"></div>
<div class="t" style="left:1795.2px;top:344px;font-size:9.7px;color:#dedede;font-weight:bold;letter-spacing:-0.186px;">Glyphen</div>
<div class="t" style="left:1768.5px;top:338.3px;font-family:'Liberation Serif',serif;font-style:italic;font-weight:bold;font-size:19px;color:#d4d4d4;">A</div>
<div style="left:1758px;top:365px;width:156px;height:1px;background:#2c2c2c;"></div>
<div style="left:1758px;top:366px;width:156px;height:1px;background:#5a5a5a;"></div>
<div style="left:1827px;top:369.2px;width:1px;height:4px;background:#1c1c1c;"></div>
<div style="left:1829px;top:369.2px;width:1px;height:4px;background:#1c1c1c;"></div>
<div style="left:1831px;top:369.2px;width:1px;height:4px;background:#1c1c1c;"></div>
<div style="left:1833px;top:369.2px;width:1px;height:4px;background:#1c1c1c;"></div>
<div style="left:1835px;top:369.2px;width:1px;height:4px;background:#1c1c1c;"></div>
<div style="left:1837px;top:369.2px;width:1px;height:4px;background:#1c1c1c;"></div>
<div style="left:1839px;top:369.2px;width:1px;height:4px;background:#1c1c1c;"></div>
<div style="left:1841px;top:369.2px;width:1px;height:4px;background:#1c1c1c;"></div>
<div style="left:1843px;top:369.2px;width:1px;height:4px;background:#1c1c1c;"></div>
<div style="left:1845px;top:369.2px;width:1px;height:4px;background:#1c1c1c;"></div>
<div class="t" style="left:1795.2px;top:385px;font-size:9.7px;color:#dedede;font-weight:bold;letter-spacing:0.265px;">Attribute</div>
<svg style="left:1768px;top:381.2px;" width="20" height="17" viewBox="0 0 20 17"><rect x="2.2" y="4.6" width="14.6" height="11.6" fill="#a8a8a8"/><circle cx="5" cy="4.2" r="3.6" fill="#9a9a9a" stroke="#e0e0e0" stroke-width="1.1"/><circle cx="11" cy="10" r="3.8" fill="none" stroke="#4a4a4a" stroke-width="1.3"/><circle cx="11" cy="10" r="3.8" fill="none" stroke="#e8e8e8" stroke-width="1.1" stroke-dasharray="12,12"/></svg>
<div class="t" style="left:1795.2px;top:413px;font-size:9.7px;color:#dedede;font-weight:bold;letter-spacing:-0.069px;">Überfüllungsvorgaben</div>
<svg style="left:1768px;top:409.3px;" width="20" height="17" viewBox="0 0 20 17"><rect x="6" y="1" width="10" height="14.6" fill="#8e8e8e" stroke="#d6d6d6" stroke-width="1.2"/><rect x="0.8" y="5.4" width="10.4" height="5.6" fill="#1e1e1e" stroke="#d6d6d6" stroke-width="1.2"/></svg>
<div class="t" style="left:1795.2px;top:441px;font-size:9.7px;color:#dedede;font-weight:bold;letter-spacing:-0.183px;">Reduzierungsvorschau</div>
<svg style="left:1768px;top:437.1px;" width="20" height="17" viewBox="0 0 20 17"><rect x="1" y="0.6" width="15.4" height="16" fill="#b4b4b4"/><rect x="1" y="0.6" width="7.7" height="8" fill="#d2d2d2"/><rect x="8.7" y="8.6" width="7.7" height="8" fill="#d2d2d2"/><path d="M4.4 8L7.6 12 13.4 3.6" fill="none" stroke="#2a2a2a" stroke-width="1.7"/></svg>
<div class="t" style="left:1795.2px;top:469px;font-size:9.7px;color:#dedede;font-weight:bold;letter-spacing:-0.224px;">Separationsvorschau</div>
<svg style="left:1768px;top:465.2px;" width="20" height="17" viewBox="0 0 20 17"><rect x="2.6" y="0.8" width="12.6" height="15.6" fill="#555" stroke="#d6d6d6" stroke-width="1.1"/><path d="M2.6 0.8L15.2 16.4M15.2 0.8L2.6 16.4" stroke="#d6d6d6" stroke-width="1"/><polygon points="2.6,16.4 15.2,16.4 8.9,8.6" fill="#c4c4c4"/><polygon points="2.6,0.8 15.2,0.8 8.9,8.6" fill="#2e2e2e"/></svg>
<div style="left:1758px;top:490.3px;width:156px;height:1px;background:#2c2c2c;"></div>
<div style="left:1758px;top:491.3px;width:156px;height:1px;background:#5a5a5a;"></div>
<div style="left:1827px;top:494.5px;width:1px;height:4px;background:#1c1c1c;"></div>
<div style="left:1829px;top:494.5px;width:1px;height:4px;background:#1c1c1c;"></div>
<div style="left:1831px;top:494.5px;width:1px;height:4px;background:#1c1c1c;"></div>
<div style="left:1833px;top:494.5px;width:1px;height:4px;background:#1c1c1c;"></div>
<div style="left:1835px;top:494.5px;width:1px;height:4px;background:#1c1c1c;"></div>
<div style="left:1837px;top:494.5px;width:1px;height:4px;background:#1c1c1c;"></div>
<div style="left:1839px;top:494.5px;width:1px;height:4px;background:#1c1c1c;"></div>
<div style="left:1841px;top:494.5px;width:1px;height:4px;background:#1c1c1c;"></div>
<div style="left:1843px;top:494.5px;width:1px;height:4px;background:#1c1c1c;"></div>
<div style="left:1845px;top:494.5px;width:1px;height:4px;background:#1c1c1c;"></div>
<div class="t" style="left:1795.2px;top:510px;font-size:9.7px;color:#dedede;font-weight:bold;letter-spacing:0.113px;">Tabellenformate</div>
<svg style="left:1768px;top:506.1px;" width="20" height="17" viewBox="0 0 20 17"><rect x="5" y="0.8" width="12" height="11.6" fill="#3a3a3a" stroke="#d0d0d0" stroke-width="1"/><rect x="5" y="0.8" width="12" height="2.6" fill="#d0d0d0"/><path d="M5 6h12M5 9h12M10 3.4v9" stroke="#d0d0d0" stroke-width="0.9"/><rect x="0.8" y="8.2" width="5.4" height="5.4" fill="#474747" stroke="#d6d6d6" stroke-width="1"/><rect x="3.6" y="11" width="5.4" height="5.4" fill="#474747" stroke="#d6d6d6" stroke-width="1"/></svg>
<div class="t" style="left:1795.2px;top:538px;font-size:9.7px;color:#dedede;font-weight:bold;letter-spacing:0.115px;">Zellenformate</div>
<svg style="left:1768px;top:534.2px;" width="20" height="17" viewBox="0 0 20 17"><rect x="5" y="0.8" width="12" height="11.6" fill="#3a3a3a" stroke="#d0d0d0" stroke-width="1"/><rect x="5" y="0.8" width="12" height="2.6" fill="#d0d0d0"/><rect x="10.6" y="5.2" width="5" height="5.6" fill="#a8a8a8"/><rect x="0.8" y="8.2" width="5.4" height="5.4" fill="#474747" stroke="#d6d6d6" stroke-width="1"/><rect x="3.6" y="11" width="5.4" height="5.4" fill="#474747" stroke="#d6d6d6" stroke-width="1"/></svg>
<div style="left:1758px;top:558.7px;width:156px;height:1px;background:#2c2c2c;"></div>
<div style="left:1758px;top:559.7px;width:156px;height:1px;background:#5a5a5a;"></div>
<div style="left:294.4px;top:397px;width:208.2px;height:192.7px;background:#474747;border:1px solid #2a2a2a;border-radius:3px 3px 0 0;box-shadow:0 1px 4px rgba(0,0,0,0.45);overflow:hidden;"><div style="left:0;top:0;width:208px;height:13.5px;background:#2d2d2d;"></div><div style="left:0;top:13.5px;width:208px;height:16px;background:#333;border-bottom:1px solid #2a2a2a;"></div><div style="left:0;top:13.5px;width:48px;height:16.5px;background:#474747;border-right:1px solid #2a2a2a;"></div></div>
<svg style="left:474px;top:402px;" width="8" height="6" viewBox="0 0 8 6"><polygon points="3,0 3,5.2 0,2.6" fill="#d8d8d8"/><polygon points="6.8,0 6.8,5.2 3.8,2.6" fill="#d8d8d8"/></svg>
<svg style="left:491px;top:402px;" width="7" height="6" viewBox="0 0 7 6"><path d="M0.6 0.4l5 5M5.6 0.4l-5 5" stroke="#e0e0e0" stroke-width="1.4"/></svg>
<div class="t" style="left:302.6px;top:415.7px;font-size:10px;color:#e2e2e2;font-weight:bold;letter-spacing:-0.102px;">Tabelle</div>
<svg style="left:484.5px;top:416px;" width="14" height="8" viewBox="0 0 14 8"><polygon points="0.3,1.4 4.6,1.4 2.45,4" fill="#d0d0d0"/><path d="M5.6 0.8h8M5.6 2.9h8M5.6 5h8M5.6 7.1h8" stroke="#d0d0d0" stroke-width="1"/></svg>
<svg style="left:304px;top:437px;" width="13" height="14" viewBox="0 0 13 14"><rect x="0.5" y="0.5" width="12" height="13" fill="#2c2c2c" stroke="#d6d6d6" stroke-width="1"/><path d="M0.5 4.5h12M0.5 9.5h12" stroke="#dcdcdc" stroke-width="1"/></svg>
<div style="left:321.2px;top:436.2px;width:13.3px;height:15.4px;background:#5a5a5a;border:1px solid #2f2f2f;"></div>
<div style="left:322.2px;top:443.4px;width:11.3px;height:1px;background:#3a3a3a;"></div>
<svg style="left:324.7px;top:438.7px;" width="6" height="3.5" viewBox="0 0 6 3.5"><polygon points="0,3.5 6,3.5 3.0,0" fill="#eaeaea"/></svg>
<svg style="left:324.7px;top:445.59999999999997px;" width="6" height="3.5" viewBox="0 0 6 3.5"><polygon points="0,0 6,0 3.0,3.5" fill="#eaeaea"/></svg>
<div style="left:336.4px;top:436.2px;width:54.4px;height:15.4px;background:#a4a4a4;border:1px solid #2b2b2b;overflow:hidden;box-shadow:inset 0 1px 0 #8e8e8e;"><div class="ft" style="left:1.6px;top:1.40px;font-size:10.6px;transform-origin:0 0;transform:scaleX(0.95);">6</div></div>
<svg style="left:409px;top:437px;" width="13" height="14" viewBox="0 0 13 14"><rect x="0.5" y="0.5" width="12" height="13" fill="#5a5a5a" stroke="#d6d6d6" stroke-width="1"/><path d="M4.5 0.5v13M8.5 0.5v13" stroke="#dcdcdc" stroke-width="1"/></svg>
<div style="left:425.6px;top:436.2px;width:13.3px;height:15.4px;background:#5a5a5a;border:1px solid #2f2f2f;"></div>
<div style="left:426.6px;top:443.4px;width:11.3px;height:1px;background:#3a3a3a;"></div>
<svg style="left:429.1px;top:438.7px;" width="6" height="3.5" viewBox="0 0 6 3.5"><polygon points="0,3.5 6,3.5 3.0,0" fill="#eaeaea"/></svg>
<svg style="left:429.1px;top:445.59999999999997px;" width="6" height="3.5" viewBox="0 0 6 3.5"><polygon points="0,0 6,0 3.0,3.5" fill="#eaeaea"/></svg>
<div style="left:440.4px;top:436.2px;width:54.6px;height:15.4px;background:#a4a4a4;border:1px solid #2b2b2b;overflow:hidden;box-shadow:inset 0 1px 0 #8e8e8e;"><div class="ft" style="left:1.6px;top:1.40px;font-size:10.6px;transform-origin:0 0;transform:scaleX(0.95);">2</div></div>
<div style="left:300px;top:459px;width:198px;height:1px;background:#383838;"></div>
<div style="left:300px;top:460px;width:198px;height:1px;background:#525252;"></div>
<svg style="left:304px;top:467px;" width="13" height="14" viewBox="0 0 13 14"><rect x="0.5" y="0.5" width="12" height="13" fill="#2c2c2c" stroke="#d6d6d6" stroke-width="1"/><path d="M0.5 2.5h12M0.5 11.5h12" stroke="#dcdcdc" stroke-width="1"/><path d="M6.5 4v6M5 4.5h3M5 9.5h3" stroke="#dcdcdc" stroke-width="1" fill="none"/></svg>
<div style="left:321.2px;top:466.4px;width:69.2px;height:15.4px;background:linear-gradient(#5c5c5c,#4b4b4b);border:1px solid #2b2b2b;"><div class="t" style="left:2.6px;top:1.9px;font-size:9.4px;color:#e2e2e2;letter-spacing:-0.347px;">Mindestens</div></div>
<div style="left:377px;top:468.9px;width:1px;height:10.4px;background:#333;"></div>
<div style="left:378px;top:468.9px;width:1px;height:10.4px;background:#6a6a6a;"></div>
<svg style="left:381px;top:471.59999999999997px;" width="7.2" height="5" viewBox="0 0 7.2 5"><polygon points="0,0 7.2,0 3.6,5" fill="#e6e6e6"/></svg>
<div style="left:407.2px;top:466.4px;width:13.3px;height:15.4px;background:#5a5a5a;border:1px solid #2f2f2f;"></div>
<div style="left:408.2px;top:473.59999999999997px;width:11.3px;height:1px;background:#3a3a3a;"></div>
<svg style="left:410.7px;top:468.9px;" width="6" height="3.5" viewBox="0 0 6 3.5"><polygon points="0,3.5 6,3.5 3.0,0" fill="#7c7c7c"/></svg>
<svg style="left:410.7px;top:475.79999999999995px;" width="6" height="3.5" viewBox="0 0 6 3.5"><polygon points="0,0 6,0 3.0,3.5" fill="#7c7c7c"/></svg>
<div style="left:421.8px;top:466.4px;width:73.2px;height:15.4px;background:#a4a4a4;border:1px solid #2b2b2b;overflow:hidden;box-shadow:inset 0 1px 0 #8e8e8e;"></div>
<svg style="left:304px;top:489px;" width="13" height="14" viewBox="0 0 13 14"><rect x="0.5" y="0.5" width="12" height="13" fill="#2c2c2c" stroke="#d6d6d6" stroke-width="1"/><path d="M2.5 0.5v13M10.5 0.5v13" stroke="#dcdcdc" stroke-width="1"/><path d="M4 7h5M4.5 5.5v3M8.5 5.5v3" stroke="#dcdcdc" stroke-width="1" fill="none"/></svg>
<div style="left:321.2px;top:488.2px;width:13.3px;height:15.4px;background:#5a5a5a;border:1px solid #2f2f2f;"></div>
<div style="left:322.2px;top:495.4px;width:11.3px;height:1px;background:#3a3a3a;"></div>
<svg style="left:324.7px;top:490.7px;" width="6" height="3.5" viewBox="0 0 6 3.5"><polygon points="0,3.5 6,3.5 3.0,0" fill="#7c7c7c"/></svg>
<svg style="left:324.7px;top:497.59999999999997px;" width="6" height="3.5" viewBox="0 0 6 3.5"><polygon points="0,0 6,0 3.0,3.5" fill="#7c7c7c"/></svg>
<div style="left:336.4px;top:488.2px;width:54px;height:15.4px;background:#a4a4a4;border:1px solid #2b2b2b;overflow:hidden;box-shadow:inset 0 1px 0 #8e8e8e;"></div>
<div style="left:300px;top:512.2px;width:198px;height:1px;background:#383838;"></div>
<div style="left:300px;top:513.2px;width:198px;height:1px;background:#525252;"></div>
<div style="left:304.9px;top:520.8px;width:14.2px;height:1px;background:#d4d4d4;"></div>
<div style="left:304.9px;top:523px;width:14.2px;height:1px;background:#d4d4d4;"></div>
<div style="left:304.9px;top:525.2px;width:14.2px;height:1px;background:#d4d4d4;"></div>
<div style="left:329px;top:524.4px;width:14.2px;height:1px;background:#d4d4d4;"></div>
<div style="left:329px;top:526.7px;width:14.2px;height:1px;background:#d4d4d4;"></div>
<div style="left:329px;top:529px;width:14.2px;height:1px;background:#d4d4d4;"></div>
<div style="left:352.9px;top:528.6px;width:14.2px;height:1px;background:#d4d4d4;"></div>
<div style="left:352.9px;top:530.9px;width:14.2px;height:1px;background:#d4d4d4;"></div>
<div style="left:352.9px;top:533.2px;width:14.2px;height:1px;background:#d4d4d4;"></div>
<div style="left:377px;top:520.2px;width:14.2px;height:1px;background:#d4d4d4;"></div>
<div style="left:377px;top:526.9px;width:14.2px;height:1px;background:#d4d4d4;"></div>
<div style="left:377px;top:533.5px;width:14.2px;height:1px;background:#d4d4d4;"></div>
<div class="t" style="left:410px;top:522.8px;width:10px;height:10px;"><div class="t" style="left:0;top:-1.2px;width:10px;text-align:center;font-family:'Liberation Serif',serif;font-weight:bold;font-size:12.5px;color:#d8d8d8;transform-origin:5px 6.6px;transform:rotate(0deg);">T</div></div>
<div class="t" style="left:434.3px;top:522.8px;width:10px;height:10px;"><div class="t" style="left:0;top:-1.2px;width:10px;text-align:center;font-family:'Liberation Serif',serif;font-weight:bold;font-size:12.5px;color:#d8d8d8;transform-origin:5px 6.6px;transform:rotate(90deg);">T</div></div>
<div class="t" style="left:458px;top:522.8px;width:10px;height:10px;"><div class="t" style="left:0;top:-1.2px;width:10px;text-align:center;font-family:'Liberation Serif',serif;font-weight:bold;font-size:12.5px;color:#d8d8d8;transform-origin:5px 6.6px;transform:rotate(180deg);">T</div></div>
<div class="t" style="left:481.8px;top:522.8px;width:10px;height:10px;"><div class="t" style="left:0;top:-1.2px;width:10px;text-align:center;font-family:'Liberation Serif',serif;font-weight:bold;font-size:12.5px;color:#d8d8d8;transform-origin:5px 6.6px;transform:rotate(270deg);">T</div></div>
<svg style="left:304px;top:543px;" width="13" height="14" viewBox="0 0 13 14"><rect x="0.5" y="0.5" width="12" height="13" fill="#2c2c2c" stroke="#d6d6d6" stroke-width="1"/><path d="M3 7.5h7M3 9.5h7M3 11.5h7" stroke="#dcdcdc" stroke-width="1"/><path d="M6.5 2v3.5M4.8 3.8l1.7 1.8 1.7-1.8" stroke="#dcdcdc" stroke-width="1" fill="none"/></svg>
<div style="left:321.2px;top:542.3px;width:13.3px;height:15.4px;background:#5a5a5a;border:1px solid #2f2f2f;"></div>
<div style="left:322.2px;top:549.5px;width:11.3px;height:1px;background:#3a3a3a;"></div>
<svg style="left:324.7px;top:544.8px;" width="6" height="3.5" viewBox="0 0 6 3.5"><polygon points="0,3.5 6,3.5 3.0,0" fill="#eaeaea"/></svg>
<svg style="left:324.7px;top:551.6999999999999px;" width="6" height="3.5" viewBox="0 0 6 3.5"><polygon points="0,0 6,0 3.0,3.5" fill="#eaeaea"/></svg>
<div style="left:336.4px;top:542.3px;width:44.6px;height:15.4px;background:#a4a4a4;border:1px solid #2b2b2b;overflow:hidden;box-shadow:inset 0 1px 0 #8e8e8e;"><div class="ft" style="left:2.4px;top:1.57px;font-size:10.4px;transform-origin:0 0;transform:scaleX(0.9787);">1,411 mm</div></div>
<svg style="left:418px;top:543px;" width="13" height="14" viewBox="0 0 13 14"><rect x="0.5" y="0.5" width="12" height="13" fill="#2c2c2c" stroke="#d6d6d6" stroke-width="1"/><path d="M7 2.5h4M7 4.5h4M7 6.5h4M7 8.5h4M7 10.5h4" stroke="#dcdcdc" stroke-width="1"/><path d="M2 6.5h4M4 4.6l1.9 1.9-1.9 1.9" stroke="#dcdcdc" stroke-width="1" fill="none"/></svg>
<div style="left:435.3px;top:542.3px;width:13.3px;height:15.4px;background:#5a5a5a;border:1px solid #2f2f2f;"></div>
<div style="left:436.3px;top:549.5px;width:11.3px;height:1px;background:#3a3a3a;"></div>
<svg style="left:438.8px;top:544.8px;" width="6" height="3.5" viewBox="0 0 6 3.5"><polygon points="0,3.5 6,3.5 3.0,0" fill="#eaeaea"/></svg>
<svg style="left:438.8px;top:551.6999999999999px;" width="6" height="3.5" viewBox="0 0 6 3.5"><polygon points="0,0 6,0 3.0,3.5" fill="#eaeaea"/></svg>
<div style="left:450.1px;top:542.3px;width:44.9px;height:15.4px;background:#a4a4a4;border:1px solid #2b2b2b;overflow:hidden;box-shadow:inset 0 1px 0 #8e8e8e;"><div class="ft" style="left:2.4px;top:1.57px;font-size:10.4px;transform-origin:0 0;transform:scaleX(0.9787);">1,411 mm</div></div>
<svg style="left:304px;top:565px;" width="13" height="14" viewBox="0 0 13 14"><rect x="0.5" y="0.5" width="12" height="13" fill="#2c2c2c" stroke="#d6d6d6" stroke-width="1"/><path d="M3 2.5h7M3 4.5h7M3 6.5h7" stroke="#dcdcdc" stroke-width="1"/><path d="M6.5 12v-3.5M4.8 10.2l1.7-1.8 1.7 1.8" stroke="#dcdcdc" stroke-width="1" fill="none"/></svg>
<div style="left:321.2px;top:564.4px;width:13.3px;height:15.4px;background:#5a5a5a;border:1px solid #2f2f2f;"></div>
<div style="left:322.2px;top:571.6px;width:11.3px;height:1px;background:#3a3a3a;"></div>
<svg style="left:324.7px;top:566.9px;" width="6" height="3.5" viewBox="0 0 6 3.5"><polygon points="0,3.5 6,3.5 3.0,0" fill="#eaeaea"/></svg>
<svg style="left:324.7px;top:573.8px;" width="6" height="3.5" viewBox="0 0 6 3.5"><polygon points="0,0 6,0 3.0,3.5" fill="#eaeaea"/></svg>
<div style="left:336.4px;top:564.4px;width:44.6px;height:15.4px;background:#a4a4a4;border:1px solid #2b2b2b;overflow:hidden;box-shadow:inset 0 1px 0 #8e8e8e;"><div class="ft" style="left:2.4px;top:1.57px;font-size:10.4px;transform-origin:0 0;transform:scaleX(0.9787);">1,411 mm</div></div>
<svg style="left:418px;top:565px;" width="13" height="14" viewBox="0 0 13 14"><rect x="0.5" y="0.5" width="12" height="13" fill="#2c2c2c" stroke="#d6d6d6" stroke-width="1"/><path d="M2 2.5h4M2 4.5h4M2 6.5h4M2 8.5h4M2 10.5h4" stroke="#dcdcdc" stroke-width="1"/><path d="M11 7.5h-4M9 5.6l-1.9 1.9 1.9 1.9" stroke="#dcdcdc" stroke-width="1" fill="none"/></svg>
<div style="left:435.3px;top:564.4px;width:13.3px;height:15.4px;background:#5a5a5a;border:1px solid #2f2f2f;"></div>
<div style="left:436.3px;top:571.6px;width:11.3px;height:1px;background:#3a3a3a;"></div>
<svg style="left:438.8px;top:566.9px;" width="6" height="3.5" viewBox="0 0 6 3.5"><polygon points="0,3.5 6,3.5 3.0,0" fill="#eaeaea"/></svg>
<svg style="left:438.8px;top:573.8px;" width="6" height="3.5" viewBox="0 0 6 3.5"><polygon points="0,0 6,0 3.0,3.5" fill="#eaeaea"/></svg>
<div style="left:450.1px;top:564.4px;width:44.9px;height:15.4px;background:#a4a4a4;border:1px solid #2b2b2b;overflow:hidden;box-shadow:inset 0 1px 0 #8e8e8e;"><div class="ft" style="left:2.4px;top:1.57px;font-size:10.4px;transform-origin:0 0;transform:scaleX(0.9787);">1,411 mm</div></div>
<div style="left:390.3px;top:552.2px;width:17.6px;height:17.4px;background:#353535;"></div>
<svg style="left:390.3px;top:552.2px;" width="18" height="18" viewBox="0 0 18 18"><rect x="6" y="2" width="5.6" height="7.6" rx="2.8" fill="none" stroke="#d8d8d8" stroke-width="1.6"/><rect x="6" y="7.8" width="5.6" height="7.6" rx="2.8" fill="none" stroke="#d8d8d8" stroke-width="1.6"/><rect x="7.9" y="6" width="1.8" height="5.4" fill="#d8d8d8"/></svg>
<div style="left:0px;top:1px;width:1914px;height:1px;background:#333;"></div>
<div style="left:1px;top:0px;width:1px;height:1041px;background:#3a3a3a;"></div>
<div style="left:1912px;top:0px;width:1px;height:1041px;background:#3a3a3a;"></div>
<div style="left:0px;top:1039px;width:1914px;height:1px;background:#1c1c1c;"></div>
<div style="left:0px;top:0px;width:1914px;height:1px;background:#e6e6e6;"></div>
<div style="left:0px;top:0px;width:1px;height:1041px;background:#dcdcdc;"></div>
<div style="left:0px;top:1040px;width:1914px;height:1px;background:#dcdcdc;"></div>
<div style="left:1913px;top:0px;width:1px;height:1041px;background:#dcdcdc;"></div>
</body></html>
